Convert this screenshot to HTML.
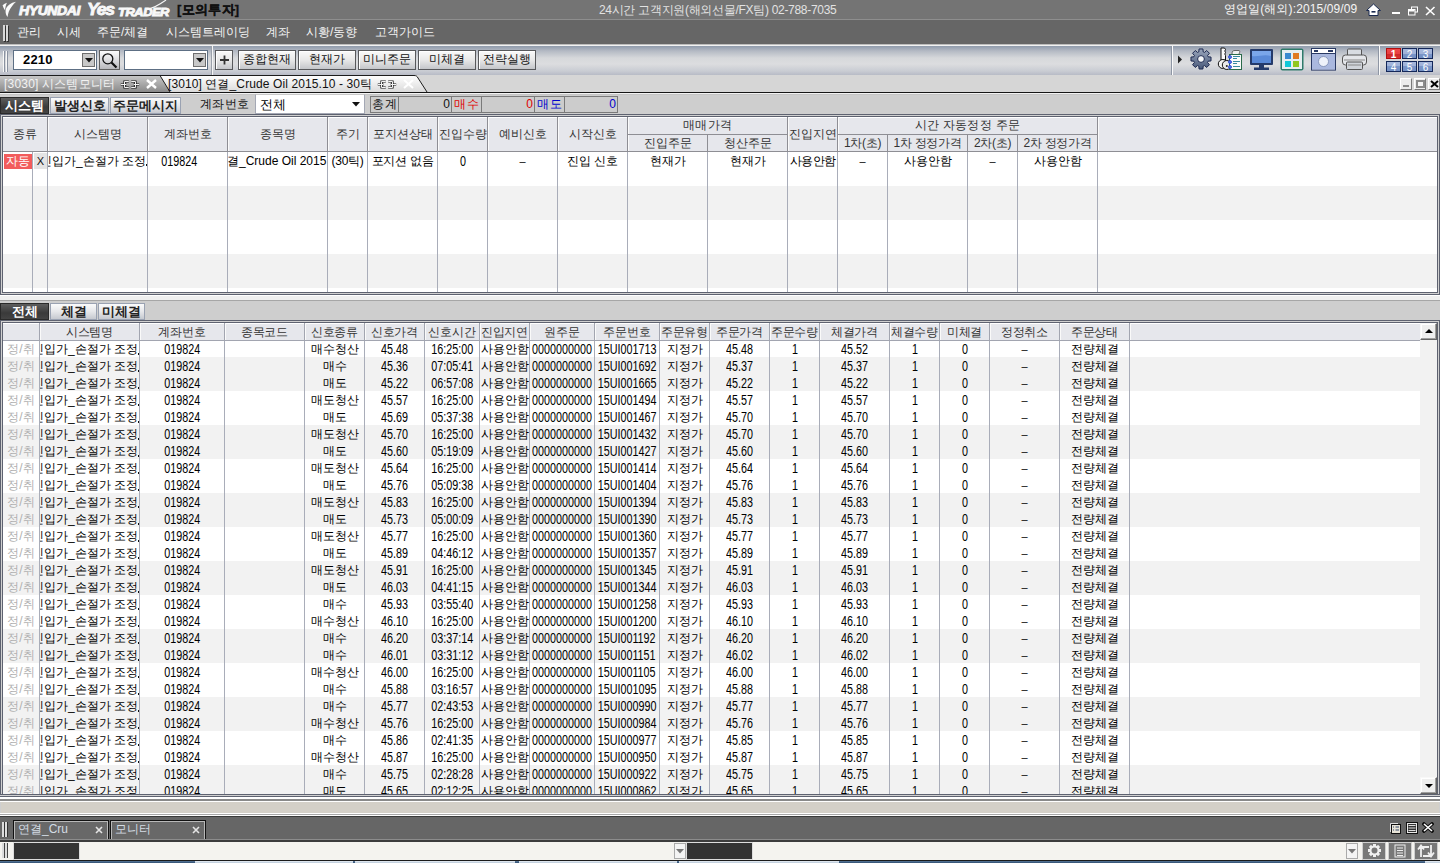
<!DOCTYPE html><html><head><meta charset="utf-8"><style>
*{margin:0;padding:0;box-sizing:border-box}
html,body{width:1440px;height:863px;overflow:hidden;background:#cfcfcf;font-family:"Liberation Sans",sans-serif;font-size:12px;color:#000}
div{position:absolute}
.t{white-space:nowrap;line-height:14px}
.c{white-space:nowrap;text-align:center;overflow:hidden}
.n{display:inline-block;font-size:14px;margin:0 -30px;transform:scaleX(.77);transform-origin:50% 50%}
.btn{background:linear-gradient(#fafafa,#e8e8e8 50%,#c4c6ca);border:1px solid #58595c;box-shadow:inset 1px 1px 0 #fff}
</style></head><body><div style="left:0px;top:0px;width:1440px;height:19px;background:#747474"></div>
<div style="left:0px;top:19px;width:1440px;height:1px;background:#8e8e8e"></div>
<div style="left:0px;top:20px;width:1440px;height:24px;background:#666666"></div>
<div style="left:3px;top:25px;width:2px;height:16px;background:#d8d8d8;box-shadow:1px 1px 0 #333"></div>
<div style="left:6px;top:25px;width:2px;height:16px;background:#d8d8d8;box-shadow:1px 1px 0 #333"></div>
<div class="t" style="left:17px;top:25px;color:#f4f4f4;font-size:12px">관리</div>
<div class="t" style="left:57px;top:25px;color:#f4f4f4;font-size:12px">시세</div>
<div class="t" style="left:97px;top:25px;color:#f4f4f4;font-size:12px">주문/체결</div>
<div class="t" style="left:166px;top:25px;color:#f4f4f4;font-size:12px">시스템트레이딩</div>
<div class="t" style="left:266px;top:25px;color:#f4f4f4;font-size:12px">계좌</div>
<div class="t" style="left:306px;top:25px;color:#f4f4f4;font-size:12px">시황/동향</div>
<div class="t" style="left:375px;top:25px;color:#f4f4f4;font-size:12px">고객가이드</div>
<div style="left:0px;top:44px;width:1440px;height:1px;background:#bdbdbd"></div>
<div style="left:0px;top:45px;width:1440px;height:1px;background:#f2f2f2"></div>
<div style="left:0px;top:46px;width:1440px;height:29px;background:linear-gradient(#8f9aab 0px,#b4bac4 5px,#d6d8db 12px,#dcdddf 18px,#c9ccd3 25px,#b7bbc6 29px)"></div>
<div style="left:3px;top:51px;width:1px;height:21px;background:#f8f8f8;box-shadow:1px 0 0 #8a92a0"></div>
<div style="left:6px;top:51px;width:1px;height:21px;background:#f8f8f8;box-shadow:1px 0 0 #8a92a0"></div>
<svg style="position:absolute;left:0px;top:0px" width="18" height="19" viewBox="0 0 18 19"><path d="M16 1.8 C11 2.6 6.2 6 5.6 10.5 C5.3 13 6.3 15.5 7.6 17 C8 13.5 9.2 9.5 11.8 6.5 C13.2 4.6 14.6 3 16 1.8Z" fill="#fafafa"/><path d="M2.6 5.2 C4 4.2 5.3 3.3 6.9 2.8 C5.9 5 5.3 7.5 5.1 10.5 C4 8.8 3.1 7 2.6 5.2Z" fill="#fafafa"/></svg>
<div class="t" style="left:19px;top:2px;color:#f8f8f8;font-size:13px;font-weight:bold;font-style:italic;letter-spacing:-0.4px;line-height:17px;-webkit-text-stroke:0.9px #f8f8f8;transform:scaleX(1.08);transform-origin:left">HYUNDAI</div>
<div class="t" style="left:87px;top:0px;color:#f8f8f8;font-size:16px;font-weight:bold;font-style:italic;letter-spacing:-1.2px;line-height:19px;-webkit-text-stroke:0.8px #f8f8f8;transform:scaleX(1.1);transform-origin:left">Yes</div>
<div class="t" style="left:118px;top:5px;color:#f8f8f8;font-size:11.5px;font-weight:bold;font-style:italic;letter-spacing:-0.4px;line-height:14px;-webkit-text-stroke:0.9px #f8f8f8;transform:scaleX(1.12);transform-origin:left">TRADER</div>
<svg style="position:absolute;left:146px;top:0px" width="22" height="10" viewBox="0 0 22 10"><path d="M1 9.5 C7 8 13 5 20 0" stroke="#f8f8f8" stroke-width="1.1" fill="none"/></svg>
<div class="t" style="left:177px;top:2px;color:#111;font-size:13px;font-weight:bold;line-height:16px;letter-spacing:0.3px;-webkit-text-stroke:0.3px #111">[모의투자]</div>
<div class="t" style="left:599px;top:3px;color:#e2e2e2;font-size:12px;line-height:14px;letter-spacing:-0.3px">24시간 고객지원(해외선물/FX팀) 02-788-7035</div>
<div class="t" style="left:1224px;top:2px;color:#f4f4f4;font-size:12px;line-height:14px;letter-spacing:0.1px">영업일(해외):2015/09/09</div>
<svg style="position:absolute;left:1365px;top:3px" width="17" height="14" viewBox="0 0 17 14"><path d="M8.5 1 L15.5 7.5 L13 7.5 L13 12.5 L4 12.5 L4 7.5 L1.5 7.5 Z" fill="#fff" stroke="#1a2a50" stroke-width="1"/><rect x="6.5" y="8" width="4" height="1.6" fill="#1a2a50"/></svg>
<div style="left:1392px;top:12px;width:8px;height:2px;background:#fff"></div>
<svg style="position:absolute;left:1408px;top:6px" width="11" height="10" viewBox="0 0 11 10"><rect x="3.5" y="1" width="6" height="5" fill="none" stroke="#fff" stroke-width="1"/><rect x="0.5" y="3.5" width="6.5" height="5.5" fill="#747474" stroke="#fff" stroke-width="1"/><rect x="1" y="4" width="5.5" height="1.5" fill="#fff"/></svg>
<svg style="position:absolute;left:1425px;top:6px" width="11" height="10" viewBox="0 0 11 10"><path d="M1 1 L9.5 9 M9.5 1 L1 9" stroke="#fff" stroke-width="1.6"/></svg>
<div style="left:13px;top:50px;width:84px;height:20px;background:#fff;border:1px solid #5d6f84"></div>
<div class="t" style="left:23px;top:53px;font-weight:bold;font-size:13px;line-height:14px;letter-spacing:0.2px">2210</div>
<div style="left:82px;top:53px;width:13px;height:14px;background:#c8c8c8;border:1px solid #6e6e6e"></div>
<svg style="position:absolute;left:85px;top:58px" width="8" height="5" viewBox="0 0 8 5"><path d="M0 0 H8 L4 4.5Z" fill="#111"/></svg>
<div style="left:99px;top:50px;width:21px;height:20px;background:linear-gradient(#fcfcfc,#e4e4e6 40%,#b8b8bc);border:1px solid #606060"></div>
<svg style="position:absolute;left:101px;top:52px" width="18" height="17" viewBox="0 0 18 17"><circle cx="6.8" cy="6.8" r="5" fill="none" stroke="#111" stroke-width="1.3"/><path d="M10.5 10.5 L15.5 15.5" stroke="#111" stroke-width="2.2"/></svg>
<div style="left:124px;top:50px;width:84px;height:20px;background:#fff;border:1px solid #5d6f84"></div>
<div style="left:193px;top:53px;width:13px;height:14px;background:#c8c8c8;border:1px solid #6e6e6e"></div>
<svg style="position:absolute;left:196px;top:58px" width="8" height="5" viewBox="0 0 8 5"><path d="M0 0 H8 L4 4.5Z" fill="#111"/></svg>
<div style="left:212px;top:46px;width:1px;height:29px;background:#f4f4f4;box-shadow:-1px 0 0 #9aa0aa"></div>
<div style="left:215px;top:50px;width:19px;height:20px;"></div>
<div class="btn" style="left:215px;top:50px;width:18px;height:20px"></div>
<svg style="position:absolute;left:219px;top:55px" width="11" height="10" viewBox="0 0 11 10"><path d="M1 5 H10 M5.5 0.5 V9.5" stroke="#333" stroke-width="1.8"/></svg>
<div class="btn c" style="left:238px;top:50px;width:58px;height:20px;line-height:17px;font-size:12px;color:#111">종합현재</div>
<div class="btn c" style="left:298px;top:50px;width:58px;height:20px;line-height:17px;font-size:12px;color:#111">현재가</div>
<div class="btn c" style="left:358px;top:50px;width:58px;height:20px;line-height:17px;font-size:12px;color:#111">미니주문</div>
<div class="btn c" style="left:418px;top:50px;width:58px;height:20px;line-height:17px;font-size:12px;color:#111">미체결</div>
<div class="btn c" style="left:478px;top:50px;width:58px;height:20px;line-height:17px;font-size:12px;color:#111">전략실행</div>
<div style="left:1172px;top:46px;width:1px;height:29px;background:#fafafa;box-shadow:-1px 0 0 #8e96a4"></div>
<svg style="position:absolute;left:1177px;top:55px" width="6" height="9" viewBox="0 0 6 9"><path d="M1 0.5 L5 4.5 L1 8.5Z" fill="#222"/></svg>
<svg style="position:absolute;left:1190px;top:48px" width="22" height="22" viewBox="0 0 22 22"><defs><linearGradient id="gg" x1="0" y1="0" x2="0" y2="1"><stop offset="0" stop-color="#9aa6bc"/><stop offset="1" stop-color="#4a5a7a"/></linearGradient></defs><path d="M8.17 4.16 L8.81 3.93 L9.07 0.98 L12.93 0.98 L13.19 3.93 L13.83 4.16 L14.45 4.45 L16.72 2.56 L19.44 5.28 L17.55 7.55 L17.84 8.17 L18.07 8.81 L21.02 9.07 L21.02 12.93 L18.07 13.19 L17.84 13.83 L17.55 14.45 L19.44 16.72 L16.72 19.44 L14.45 17.55 L13.83 17.84 L13.19 18.07 L12.93 21.02 L9.07 21.02 L8.81 18.07 L8.17 17.84 L7.55 17.55 L5.28 19.44 L2.56 16.72 L4.45 14.45 L4.16 13.83 L3.93 13.19 L0.98 12.93 L0.98 9.07 L3.93 8.81 L4.16 8.17 L4.45 7.55 L2.56 5.28 L5.28 2.56 L7.55 4.45Z" fill="url(#gg)" stroke="#1c2850" stroke-width="1"/><circle cx="11" cy="11" r="3.4" fill="#f4f6f8" stroke="#1c2850" stroke-width="1"/></svg>
<svg style="position:absolute;left:1217px;top:47px" width="27" height="24" viewBox="0 0 27 24"><path d="M4 1 H7.5 L8.5 2.5 L7.8 4 L8.5 5.5 L7.8 7 L8.5 8.5 V13 H4Z" fill="#fafafa" stroke="#111" stroke-width="1"/><circle cx="5.8" cy="17" r="4.5" fill="#f2f2f2" stroke="#111" stroke-width="1"/><circle cx="9.8" cy="18" r="4.5" fill="#e8e8e8" stroke="#111" stroke-width="1"/><circle cx="9.8" cy="19" r="1" fill="#222"/><path d="M15 7 C15 4 16 3.5 18 3.5 H22 C23 3.5 23 5 22 7" fill="#f0f0f0" stroke="#666" stroke-width="1"/><rect x="12.5" y="7.5" width="12" height="15" fill="#fbfbfb" stroke="#2a6a4a" stroke-width="1"/><path d="M16 9.5 H23 M16 11.5 H20 M16 14.5 H23 M16 16.5 H20 M16 19.5 H23" stroke="#3a8aa0" stroke-width="1"/><circle cx="13" cy="10" r="1.5" fill="#5a7ae8" stroke="#1a3ad0" stroke-width="0.8"/><circle cx="13" cy="15" r="1.5" fill="#5a7ae8" stroke="#1a3ad0" stroke-width="0.8"/><circle cx="13" cy="20" r="1.5" fill="#5a7ae8" stroke="#1a3ad0" stroke-width="0.8"/></svg>
<svg style="position:absolute;left:1249px;top:48px" width="25" height="23" viewBox="0 0 25 23"><rect x="1" y="1" width="23" height="16" rx="1" fill="#243a6a"/><rect x="3" y="3" width="19" height="12" fill="#5a8ad8"/><path d="M3 3 H22 V8 C15 6 9 9 3 8Z" fill="#7aa6ea"/><rect x="10" y="17" width="5" height="3" fill="#243a6a"/><rect x="5" y="19.5" width="15" height="2.5" fill="#243a6a"/></svg>
<svg style="position:absolute;left:1280px;top:48px" width="24" height="23" viewBox="0 0 24 23"><rect x="0.5" y="0.5" width="23" height="22" rx="2" fill="#2e7a6a"/><rect x="2" y="2" width="20" height="19" fill="#e6eef0"/><rect x="5" y="5" width="6" height="6" fill="#3a8ad0"/><rect x="13" y="5" width="6" height="6" fill="#e07a20"/><rect x="5" y="13" width="6" height="6" fill="#10c8d8"/><rect x="13" y="13" width="6" height="6" fill="#90c820"/></svg>
<svg style="position:absolute;left:1311px;top:48px" width="25" height="23" viewBox="0 0 25 23"><rect x="0.5" y="0.5" width="24" height="21.5" fill="#f4f6fa" stroke="#2a3a64" stroke-width="1.2"/><rect x="1" y="1" width="23" height="4.5" fill="#fff"/><rect x="3" y="2" width="4" height="2" fill="#2a3a64"/><rect x="17" y="2" width="5" height="2" fill="#2a3a64"/><path d="M1 5.5 H24" stroke="#2a3a64"/><rect x="1" y="6" width="23" height="15.5" fill="#aab8de"/><circle cx="12.5" cy="13.5" r="5" fill="#eef2fa" stroke="#7a8ab0" stroke-width="0.8"/></svg>
<svg style="position:absolute;left:1342px;top:48px" width="25" height="23" viewBox="0 0 25 23"><rect x="5.5" y="1" width="14" height="7" rx="1" fill="#d8dce2" stroke="#555" stroke-width="1"/><rect x="0.5" y="7" width="24" height="10" rx="3" fill="#e4e6ea" stroke="#555" stroke-width="1"/><path d="M2 12 H23" stroke="#888"/><rect x="4.5" y="14" width="16" height="7.5" rx="1" fill="#d0d4da" stroke="#555" stroke-width="1"/><path d="M6 17 H19" stroke="#888"/></svg>
<div style="left:1379px;top:46px;width:1px;height:29px;background:#fafafa;box-shadow:-1px 0 0 #8e96a4"></div>
<div class="c" style="left:1386px;top:48px;width:15px;height:11px;line-height:11px;background:linear-gradient(#f04848 0,#e84040 50%,#cc2828 50%,#d83030);border:1px solid #b01010;color:#fff;font-size:10px;font-weight:bold">1</div>
<div class="c" style="left:1402px;top:48px;width:15px;height:11px;line-height:11px;background:linear-gradient(#a6b8dc 0,#a0b2d8 50%,#7a96c8 50%,#7490c4);border:1px solid #14285a;color:#fff;font-size:10px;font-weight:normal">2</div>
<div class="c" style="left:1418px;top:48px;width:15px;height:11px;line-height:11px;background:linear-gradient(#a6b8dc 0,#a0b2d8 50%,#7a96c8 50%,#7490c4);border:1px solid #14285a;color:#fff;font-size:10px;font-weight:normal">3</div>
<div class="c" style="left:1386px;top:61px;width:15px;height:11px;line-height:11px;background:linear-gradient(#a6b8dc 0,#a0b2d8 50%,#7a96c8 50%,#7490c4);border:1px solid #14285a;color:#fff;font-size:10px;font-weight:normal">4</div>
<div class="c" style="left:1402px;top:61px;width:15px;height:11px;line-height:11px;background:linear-gradient(#a6b8dc 0,#a0b2d8 50%,#7a96c8 50%,#7490c4);border:1px solid #14285a;color:#fff;font-size:10px;font-weight:normal">5</div>
<div class="c" style="left:1418px;top:61px;width:15px;height:11px;line-height:11px;background:linear-gradient(#a6b8dc 0,#a0b2d8 50%,#7a96c8 50%,#7490c4);border:1px solid #14285a;color:#fff;font-size:10px;font-weight:normal">6</div>
<div style="left:0px;top:75px;width:1440px;height:17px;background:#d6d6d6"></div>
<svg style="position:absolute;left:0;top:75px" width="440" height="18" viewBox="0 0 440 18"><defs><linearGradient id="g1" x1="0" y1="0" x2="0" y2="1"><stop offset="0" stop-color="#c8c8c8"/><stop offset="1" stop-color="#8a8a8a"/></linearGradient><linearGradient id="g2" x1="0" y1="0" x2="0" y2="1"><stop offset="0" stop-color="#ffffff"/><stop offset="1" stop-color="#dadada"/></linearGradient></defs><path d="M0 0.5 H160 L170 17 H0Z" fill="url(#g1)"/><path d="M160 0.5 H414 C416 0.5 417 1 418 3 L427 17 H170Z" fill="url(#g2)"/><path d="M0 0.5 H414 C416 0.5 417 1 418 3 L427 17" fill="none" stroke="#1c1c1c" stroke-width="1"/><path d="M160 0.5 L170 17" stroke="#1c1c1c" stroke-width="1"/></svg>
<div class="t" style="left:4px;top:77px;color:#f2f2f2;font-size:12px;line-height:14px;letter-spacing:0.2px">[3030] 시스템모니터</div>
<svg style="position:absolute;left:120px;top:79px" width="20" height="11" viewBox="0 0 20 11"><path d="M0.8 5.5 H6.5 M8.8 2.5 H4.5 V8.5 H8.8 M11.2 2.5 H15.5 V8.5 H11.2 M13.5 5.5 H19.2" fill="none" stroke="#111" stroke-width="2.2"/><path d="M0.8 5.5 H6.5 M8.8 2.5 H4.5 V8.5 H8.8 M11.2 2.5 H15.5 V8.5 H11.2 M13.5 5.5 H19.2" fill="none" stroke="#f4f4f4" stroke-width="1"/></svg>
<svg style="position:absolute;left:146px;top:79px" width="11" height="10" viewBox="0 0 11 10"><path d="M1 1 L10 9 M10 1 L1 9" stroke="#fff" stroke-width="2.4"/></svg>
<div class="t" style="left:168px;top:77px;color:#111;font-size:12px;line-height:14px;letter-spacing:0.1px">[3010] 연결_Crude Oil 2015.10 - 30틱</div>
<svg style="position:absolute;left:377px;top:79px" width="20" height="11" viewBox="0 0 20 11"><path d="M0.8 5.5 H6.5 M8.8 2.5 H4.5 V8.5 H8.8 M11.2 2.5 H15.5 V8.5 H11.2 M13.5 5.5 H19.2" fill="none" stroke="#111" stroke-width="2.2"/><path d="M0.8 5.5 H6.5 M8.8 2.5 H4.5 V8.5 H8.8 M11.2 2.5 H15.5 V8.5 H11.2 M13.5 5.5 H19.2" fill="none" stroke="#f4f4f4" stroke-width="1"/></svg>
<svg style="position:absolute;left:403px;top:79px" width="11" height="10" viewBox="0 0 11 10"><path d="M1 1 L10 9 M10 1 L1 9" stroke="#fff" stroke-width="2"/></svg>
<div style="left:1400px;top:78px;width:12px;height:12px;background:#ececec;border:1px solid;border-color:#fff #7a7a7a #7a7a7a #fff"></div>
<div style="left:1414px;top:78px;width:12px;height:12px;background:#ececec;border:1px solid;border-color:#fff #7a7a7a #7a7a7a #fff"></div>
<div style="left:1428px;top:78px;width:12px;height:12px;background:#ececec;border:1px solid;border-color:#fff #7a7a7a #7a7a7a #fff"></div>
<div style="left:1403px;top:85px;width:6px;height:2px;background:#8a8a8a"></div>
<div style="left:1416px;top:80px;width:9px;height:8px;border:2px solid #8a8a8a;background:#f4f4f4"></div>
<svg style="position:absolute;left:1430px;top:80px" width="9" height="8" viewBox="0 0 9 8"><path d="M1 1 L8 7 M8 1 L1 7" stroke="#000" stroke-width="2"/></svg>
<div style="left:0px;top:92px;width:1440px;height:1px;background:#161616"></div>
<div style="left:0px;top:93px;width:1440px;height:1px;background:#f2f2f2"></div>
<div style="left:0px;top:94px;width:1440px;height:1px;background:#c4c4c4"></div>
<div style="left:0px;top:95px;width:1440px;height:19px;background:#cecece"></div>
<div class="c" style="left:0px;top:97px;width:49px;height:17px;line-height:16px;background:linear-gradient(#5e5e5e,#3a3a3a 60%,#444);border:1px solid #2a2a2a;color:#fff;font-weight:bold;font-size:13px;letter-spacing:0px">시스템</div>
<div class="c" style="left:50px;top:97px;width:59px;height:17px;line-height:16px;background:linear-gradient(#fbfbfb,#e6e7ea 50%,#c6c9d0);border:1px solid #9aa2b2;color:#222;font-weight:bold;font-size:13px;letter-spacing:0px">발생신호</div>
<div class="c" style="left:110px;top:97px;width:71px;height:17px;line-height:16px;background:linear-gradient(#fbfbfb,#e6e7ea 50%,#c6c9d0);border:1px solid #9aa2b2;color:#222;font-weight:bold;font-size:13px;letter-spacing:0px">주문메시지</div>
<div class="t" style="left:200px;top:97px;color:#111;font-size:12px;letter-spacing:0.3px">계좌번호</div>
<div style="left:255px;top:94px;width:110px;height:20px;background:#fff;border:1px solid #a4a8b4;border-top-color:#c8c8c8"></div>
<div class="t" style="left:260px;top:97px;color:#000;font-size:13px;line-height:15px">전체</div>
<svg style="position:absolute;left:352px;top:102px" width="8" height="5" viewBox="0 0 8 5"><path d="M0 0 H8 L4 4.5Z" fill="#111"/></svg>
<div class="c" style="left:370px;top:96px;width:29px;height:17px;line-height:15px;background:#cccccc;border:1px solid #7a7a7a;color:#111;letter-spacing:0.5px">총계</div>
<div class="t" style="left:398px;top:96px;width:54px;height:17px;line-height:15px;background:#cccccc;border:1px solid #7a7a7a;color:#111;text-align:right;padding-right:1px">0</div>
<div class="c" style="left:451px;top:96px;width:31px;height:17px;line-height:15px;background:#cccccc;border:1px solid #7a7a7a;color:#e00000;letter-spacing:0.5px">매수</div>
<div class="t" style="left:481px;top:96px;width:54px;height:17px;line-height:15px;background:#cccccc;border:1px solid #7a7a7a;color:#e00000;text-align:right;padding-right:1px">0</div>
<div class="c" style="left:534px;top:96px;width:31px;height:17px;line-height:15px;background:#cccccc;border:1px solid #7a7a7a;color:#0000cc;letter-spacing:0.5px">매도</div>
<div class="t" style="left:564px;top:96px;width:54px;height:17px;line-height:15px;background:#cccccc;border:1px solid #7a7a7a;color:#0000cc;text-align:right;padding-right:1px">0</div>
<div style="left:0px;top:114px;width:1440px;height:181px;background:#5e6270"></div>
<div style="left:1px;top:115px;width:1438px;height:179px;background:#d0d0d0"></div>
<div style="left:2px;top:116px;width:1436px;height:177px;background:#5e6270"></div>
<div style="left:3px;top:117px;width:1434px;height:175px;background:#fff"></div>
<div style="left:3px;top:117px;width:1434px;height:175px;background:#fff"></div>
<div style="left:3px;top:186px;width:1434px;height:17px;background:#f2f2f2"></div>
<div style="left:3px;top:203px;width:1434px;height:17px;background:#f2f2f2"></div>
<div style="left:3px;top:254px;width:1434px;height:17px;background:#f2f2f2"></div>
<div style="left:3px;top:271px;width:1434px;height:17px;background:#f2f2f2"></div>
<div style="left:3px;top:117px;width:1434px;height:34px;background:#e6e7ec;border-top:1px solid #fff"></div>
<div style="left:3px;top:151px;width:1434px;height:1px;background:#8e8e94"></div>
<div style="left:47px;top:152px;width:1px;height:140px;background:#a9adb9"></div>
<div style="left:147px;top:152px;width:1px;height:140px;background:#a9adb9"></div>
<div style="left:227px;top:152px;width:1px;height:140px;background:#a9adb9"></div>
<div style="left:327px;top:152px;width:1px;height:140px;background:#a9adb9"></div>
<div style="left:367px;top:152px;width:1px;height:140px;background:#a9adb9"></div>
<div style="left:437px;top:152px;width:1px;height:140px;background:#a9adb9"></div>
<div style="left:487px;top:152px;width:1px;height:140px;background:#a9adb9"></div>
<div style="left:557px;top:152px;width:1px;height:140px;background:#a9adb9"></div>
<div style="left:627px;top:152px;width:1px;height:140px;background:#a9adb9"></div>
<div style="left:707px;top:152px;width:1px;height:140px;background:#a9adb9"></div>
<div style="left:787px;top:152px;width:1px;height:140px;background:#a9adb9"></div>
<div style="left:837px;top:152px;width:1px;height:140px;background:#a9adb9"></div>
<div style="left:887px;top:152px;width:1px;height:140px;background:#a9adb9"></div>
<div style="left:967px;top:152px;width:1px;height:140px;background:#a9adb9"></div>
<div style="left:1017px;top:152px;width:1px;height:140px;background:#a9adb9"></div>
<div style="left:1097px;top:152px;width:1px;height:140px;background:#a9adb9"></div>
<div style="left:32px;top:152px;width:1px;height:140px;background:#a9adb9"></div>
<div style="left:47px;top:117px;width:1px;height:34px;background:#8e8e94"></div>
<div style="left:48px;top:117px;width:1px;height:34px;background:#fafafa"></div>
<div style="left:147px;top:117px;width:1px;height:34px;background:#8e8e94"></div>
<div style="left:148px;top:117px;width:1px;height:34px;background:#fafafa"></div>
<div style="left:227px;top:117px;width:1px;height:34px;background:#8e8e94"></div>
<div style="left:228px;top:117px;width:1px;height:34px;background:#fafafa"></div>
<div style="left:327px;top:117px;width:1px;height:34px;background:#8e8e94"></div>
<div style="left:328px;top:117px;width:1px;height:34px;background:#fafafa"></div>
<div style="left:367px;top:117px;width:1px;height:34px;background:#8e8e94"></div>
<div style="left:368px;top:117px;width:1px;height:34px;background:#fafafa"></div>
<div style="left:437px;top:117px;width:1px;height:34px;background:#8e8e94"></div>
<div style="left:438px;top:117px;width:1px;height:34px;background:#fafafa"></div>
<div style="left:487px;top:117px;width:1px;height:34px;background:#8e8e94"></div>
<div style="left:488px;top:117px;width:1px;height:34px;background:#fafafa"></div>
<div style="left:557px;top:117px;width:1px;height:34px;background:#8e8e94"></div>
<div style="left:558px;top:117px;width:1px;height:34px;background:#fafafa"></div>
<div style="left:627px;top:117px;width:1px;height:34px;background:#8e8e94"></div>
<div style="left:628px;top:117px;width:1px;height:34px;background:#fafafa"></div>
<div style="left:707px;top:135px;width:1px;height:16px;background:#8e8e94"></div>
<div style="left:787px;top:117px;width:1px;height:34px;background:#8e8e94"></div>
<div style="left:788px;top:117px;width:1px;height:34px;background:#fafafa"></div>
<div style="left:837px;top:117px;width:1px;height:34px;background:#8e8e94"></div>
<div style="left:838px;top:117px;width:1px;height:34px;background:#fafafa"></div>
<div style="left:887px;top:135px;width:1px;height:16px;background:#8e8e94"></div>
<div style="left:967px;top:135px;width:1px;height:16px;background:#8e8e94"></div>
<div style="left:1017px;top:135px;width:1px;height:16px;background:#8e8e94"></div>
<div style="left:1097px;top:117px;width:1px;height:34px;background:#8e8e94"></div>
<div style="left:1098px;top:117px;width:1px;height:34px;background:#fafafa"></div>
<div style="left:628px;top:134px;width:159px;height:1px;background:#8e8e94"></div>
<div style="left:838px;top:134px;width:259px;height:1px;background:#8e8e94"></div>
<div class="c" style="left:3px;top:118px;width:44px;height:33px;line-height:33px;color:#333">종류</div>
<div class="c" style="left:48px;top:118px;width:99px;height:33px;line-height:33px;color:#333">시스템명</div>
<div class="c" style="left:148px;top:118px;width:79px;height:33px;line-height:33px;color:#333">계좌번호</div>
<div class="c" style="left:228px;top:118px;width:99px;height:33px;line-height:33px;color:#333">종목명</div>
<div class="c" style="left:328px;top:118px;width:39px;height:33px;line-height:33px;color:#333">주기</div>
<div class="c" style="left:368px;top:118px;width:69px;height:33px;line-height:33px;color:#333">포지션상태</div>
<div class="c" style="left:438px;top:118px;width:49px;height:33px;line-height:33px;color:#333">진입수량</div>
<div class="c" style="left:488px;top:118px;width:69px;height:33px;line-height:33px;color:#333">예비신호</div>
<div class="c" style="left:558px;top:118px;width:69px;height:33px;line-height:33px;color:#333">시작신호</div>
<div class="c" style="left:788px;top:118px;width:49px;height:33px;line-height:33px;color:#333">진입지연</div>
<div class="c" style="left:628px;top:117px;width:159px;height:17px;line-height:17px;color:#333;letter-spacing:0.5px">매매가격</div>
<div class="c" style="left:628px;top:135px;width:79px;height:16px;line-height:16px;color:#333">진입주문</div>
<div class="c" style="left:708px;top:135px;width:79px;height:16px;line-height:16px;color:#333">청산주문</div>
<div class="c" style="left:838px;top:117px;width:259px;height:17px;line-height:17px;color:#333;letter-spacing:0.3px">시간 자동정정 주문</div>
<div class="c" style="left:838px;top:135px;width:49px;height:16px;line-height:16px;color:#333;letter-spacing:-0.3px">1차(초)</div>
<div class="c" style="left:888px;top:135px;width:79px;height:16px;line-height:16px;color:#333;letter-spacing:-0.3px">1차 정정가격</div>
<div class="c" style="left:968px;top:135px;width:49px;height:16px;line-height:16px;color:#333;letter-spacing:-0.3px">2차(초)</div>
<div class="c" style="left:1018px;top:135px;width:79px;height:16px;line-height:16px;color:#333;letter-spacing:-0.3px">2차 정정가격</div>
<div style="left:4px;top:154px;width:28px;height:15px;background:#f25c5c"></div>
<div class="c" style="left:4px;top:154px;width:28px;height:15px;line-height:15px;color:#fff">자동</div>
<div style="left:34px;top:153px;width:13px;height:16px;background:#e4e4e4"></div>
<div class="c" style="left:34px;top:153px;width:13px;height:16px;line-height:16px;color:#111;font-size:11px;line-height:17px">X</div>
<div class="c" style="left:48px;top:153px;width:99px;height:17px;line-height:17px;text-align:left"><span style="position:absolute;left:-8px;top:0">진입가_손절가 조정</span></div>
<div style="left:146px;top:164px;width:1px;height:2px;background:#111"></div>
<div class="t" style="left:160px;top:153px;line-height:17px"><span class="n" style="margin:0 -4px">019824</span></div>
<div class="c" style="left:228px;top:153px;width:99px;height:17px;line-height:17px;"><span style="position:absolute;left:-13px;top:0">연결_Crude Oil 2015.10</span></div>
<div class="c" style="left:328px;top:153px;width:39px;height:17px;line-height:17px;letter-spacing:-0.3px">(30틱)</div>
<div class="c" style="left:368px;top:153px;width:69px;height:17px;line-height:17px;letter-spacing:-0.3px">포지션 없음</div>
<div class="c" style="left:438px;top:153px;width:49px;height:17px;line-height:17px;"><span class="n">0</span></div>
<div class="c" style="left:488px;top:153px;width:69px;height:17px;line-height:17px;font-size:11px">–</div>
<div class="c" style="left:558px;top:153px;width:69px;height:17px;line-height:17px;">진입 신호</div>
<div class="c" style="left:628px;top:153px;width:79px;height:17px;line-height:17px;">현재가</div>
<div class="c" style="left:708px;top:153px;width:79px;height:17px;line-height:17px;">현재가</div>
<div class="c" style="left:788px;top:153px;width:49px;height:17px;line-height:17px;letter-spacing:-0.5px">사용안함</div>
<div class="c" style="left:838px;top:153px;width:49px;height:17px;line-height:17px;font-size:11px">–</div>
<div class="c" style="left:888px;top:153px;width:79px;height:17px;line-height:17px;">사용안함</div>
<div class="c" style="left:968px;top:153px;width:49px;height:17px;line-height:17px;font-size:11px">–</div>
<div class="c" style="left:1018px;top:153px;width:79px;height:17px;line-height:17px;">사용안함</div>
<div style="left:0px;top:295px;width:1440px;height:1px;background:#fff"></div>
<div style="left:0px;top:296px;width:1440px;height:4px;background:#efefef"></div>
<div style="left:0px;top:300px;width:1440px;height:1px;background:#a6a6a6"></div>
<div style="left:0px;top:301px;width:1440px;height:19px;background:#cecece"></div>
<div class="c" style="left:0px;top:303px;width:49px;height:17px;line-height:16px;background:linear-gradient(#5e5e5e,#3a3a3a 60%,#444);border:1px solid #2a2a2a;color:#fff;font-weight:bold;font-size:13px;letter-spacing:0px">전체</div>
<div class="c" style="left:50px;top:303px;width:47px;height:17px;line-height:16px;background:linear-gradient(#fbfbfb,#e6e7ea 50%,#c6c9d0);border:1px solid #9aa2b2;color:#222;font-weight:bold;font-size:13px;letter-spacing:0px">체결</div>
<div class="c" style="left:98px;top:303px;width:47px;height:17px;line-height:16px;background:linear-gradient(#fbfbfb,#e6e7ea 50%,#c6c9d0);border:1px solid #9aa2b2;color:#222;font-weight:bold;font-size:13px;letter-spacing:0px">미체결</div>
<div style="left:0px;top:320px;width:1440px;height:477px;background:#5e6270"></div>
<div style="left:1px;top:321px;width:1438px;height:475px;background:#d0d0d0"></div>
<div style="left:2px;top:322px;width:1436px;height:473px;background:#5e6270"></div>
<div style="left:3px;top:323px;width:1434px;height:471px;background:#fff"></div>
<div style="left:3px;top:323px;width:1417px;height:471px;background:#fff"></div>
<div style="left:3px;top:357px;width:1417px;height:17px;background:#f2f2f2"></div>
<div style="left:3px;top:374px;width:1417px;height:17px;background:#f2f2f2"></div>
<div style="left:3px;top:425px;width:1417px;height:17px;background:#f2f2f2"></div>
<div style="left:3px;top:442px;width:1417px;height:17px;background:#f2f2f2"></div>
<div style="left:3px;top:493px;width:1417px;height:17px;background:#f2f2f2"></div>
<div style="left:3px;top:510px;width:1417px;height:17px;background:#f2f2f2"></div>
<div style="left:3px;top:561px;width:1417px;height:17px;background:#f2f2f2"></div>
<div style="left:3px;top:578px;width:1417px;height:17px;background:#f2f2f2"></div>
<div style="left:3px;top:629px;width:1417px;height:17px;background:#f2f2f2"></div>
<div style="left:3px;top:646px;width:1417px;height:17px;background:#f2f2f2"></div>
<div style="left:3px;top:697px;width:1417px;height:17px;background:#f2f2f2"></div>
<div style="left:3px;top:714px;width:1417px;height:17px;background:#f2f2f2"></div>
<div style="left:3px;top:765px;width:1417px;height:17px;background:#f2f2f2"></div>
<div style="left:3px;top:782px;width:1417px;height:12px;background:#f2f2f2"></div>
<div style="left:3px;top:323px;width:1417px;height:17px;background:#e6e7ec;border-top:1px solid #fff"></div>
<div style="left:3px;top:340px;width:1417px;height:1px;background:#a2a5b0"></div>
<div style="left:39px;top:323px;width:1px;height:17px;background:#a2a5b0"></div>
<div style="left:40px;top:323px;width:1px;height:17px;background:#fafafa"></div>
<div style="left:39px;top:341px;width:1px;height:453px;background:#a9adb9"></div>
<div style="left:139px;top:323px;width:1px;height:17px;background:#a2a5b0"></div>
<div style="left:140px;top:323px;width:1px;height:17px;background:#fafafa"></div>
<div style="left:139px;top:341px;width:1px;height:453px;background:#a9adb9"></div>
<div style="left:224px;top:323px;width:1px;height:17px;background:#a2a5b0"></div>
<div style="left:225px;top:323px;width:1px;height:17px;background:#fafafa"></div>
<div style="left:224px;top:341px;width:1px;height:453px;background:#a9adb9"></div>
<div style="left:304px;top:323px;width:1px;height:17px;background:#a2a5b0"></div>
<div style="left:305px;top:323px;width:1px;height:17px;background:#fafafa"></div>
<div style="left:304px;top:341px;width:1px;height:453px;background:#a9adb9"></div>
<div style="left:364px;top:323px;width:1px;height:17px;background:#a2a5b0"></div>
<div style="left:365px;top:323px;width:1px;height:17px;background:#fafafa"></div>
<div style="left:364px;top:341px;width:1px;height:453px;background:#a9adb9"></div>
<div style="left:424px;top:323px;width:1px;height:17px;background:#a2a5b0"></div>
<div style="left:425px;top:323px;width:1px;height:17px;background:#fafafa"></div>
<div style="left:424px;top:341px;width:1px;height:453px;background:#a9adb9"></div>
<div style="left:479px;top:323px;width:1px;height:17px;background:#a2a5b0"></div>
<div style="left:480px;top:323px;width:1px;height:17px;background:#fafafa"></div>
<div style="left:479px;top:341px;width:1px;height:453px;background:#a9adb9"></div>
<div style="left:529px;top:323px;width:1px;height:17px;background:#a2a5b0"></div>
<div style="left:530px;top:323px;width:1px;height:17px;background:#fafafa"></div>
<div style="left:529px;top:341px;width:1px;height:453px;background:#a9adb9"></div>
<div style="left:594px;top:323px;width:1px;height:17px;background:#a2a5b0"></div>
<div style="left:595px;top:323px;width:1px;height:17px;background:#fafafa"></div>
<div style="left:594px;top:341px;width:1px;height:453px;background:#a9adb9"></div>
<div style="left:659px;top:323px;width:1px;height:17px;background:#a2a5b0"></div>
<div style="left:660px;top:323px;width:1px;height:17px;background:#fafafa"></div>
<div style="left:659px;top:341px;width:1px;height:453px;background:#a9adb9"></div>
<div style="left:709px;top:323px;width:1px;height:17px;background:#a2a5b0"></div>
<div style="left:710px;top:323px;width:1px;height:17px;background:#fafafa"></div>
<div style="left:709px;top:341px;width:1px;height:453px;background:#a9adb9"></div>
<div style="left:769px;top:323px;width:1px;height:17px;background:#a2a5b0"></div>
<div style="left:770px;top:323px;width:1px;height:17px;background:#fafafa"></div>
<div style="left:769px;top:341px;width:1px;height:453px;background:#a9adb9"></div>
<div style="left:819px;top:323px;width:1px;height:17px;background:#a2a5b0"></div>
<div style="left:820px;top:323px;width:1px;height:17px;background:#fafafa"></div>
<div style="left:819px;top:341px;width:1px;height:453px;background:#a9adb9"></div>
<div style="left:889px;top:323px;width:1px;height:17px;background:#a2a5b0"></div>
<div style="left:890px;top:323px;width:1px;height:17px;background:#fafafa"></div>
<div style="left:889px;top:341px;width:1px;height:453px;background:#a9adb9"></div>
<div style="left:939px;top:323px;width:1px;height:17px;background:#a2a5b0"></div>
<div style="left:940px;top:323px;width:1px;height:17px;background:#fafafa"></div>
<div style="left:939px;top:341px;width:1px;height:453px;background:#a9adb9"></div>
<div style="left:989px;top:323px;width:1px;height:17px;background:#a2a5b0"></div>
<div style="left:990px;top:323px;width:1px;height:17px;background:#fafafa"></div>
<div style="left:989px;top:341px;width:1px;height:453px;background:#a9adb9"></div>
<div style="left:1059px;top:323px;width:1px;height:17px;background:#a2a5b0"></div>
<div style="left:1060px;top:323px;width:1px;height:17px;background:#fafafa"></div>
<div style="left:1059px;top:341px;width:1px;height:453px;background:#a9adb9"></div>
<div style="left:1129px;top:323px;width:1px;height:17px;background:#a2a5b0"></div>
<div style="left:1130px;top:323px;width:1px;height:17px;background:#fafafa"></div>
<div style="left:1129px;top:341px;width:1px;height:453px;background:#a9adb9"></div>
<div class="c" style="left:3px;top:324px;width:36px;height:16px;line-height:16px;color:#333;letter-spacing:-0.2px"></div>
<div class="c" style="left:40px;top:324px;width:99px;height:16px;line-height:16px;color:#333;letter-spacing:-0.2px">시스템명</div>
<div class="c" style="left:140px;top:324px;width:84px;height:16px;line-height:16px;color:#333;letter-spacing:-0.2px">계좌번호</div>
<div class="c" style="left:225px;top:324px;width:79px;height:16px;line-height:16px;color:#333;letter-spacing:-0.2px">종목코드</div>
<div class="c" style="left:305px;top:324px;width:59px;height:16px;line-height:16px;color:#333;letter-spacing:-0.2px">신호종류</div>
<div class="c" style="left:365px;top:324px;width:59px;height:16px;line-height:16px;color:#333;letter-spacing:-0.2px">신호가격</div>
<div class="c" style="left:425px;top:324px;width:54px;height:16px;line-height:16px;color:#333;letter-spacing:-0.2px">신호시간</div>
<div class="c" style="left:480px;top:324px;width:49px;height:16px;line-height:16px;color:#333;letter-spacing:-0.2px">진입지연</div>
<div class="c" style="left:530px;top:324px;width:64px;height:16px;line-height:16px;color:#333;letter-spacing:-0.2px">원주문</div>
<div class="c" style="left:595px;top:324px;width:64px;height:16px;line-height:16px;color:#333;letter-spacing:-0.2px">주문번호</div>
<div class="c" style="left:660px;top:324px;width:49px;height:16px;line-height:16px;color:#333;letter-spacing:-0.2px">주문유형</div>
<div class="c" style="left:710px;top:324px;width:59px;height:16px;line-height:16px;color:#333;letter-spacing:-0.2px">주문가격</div>
<div class="c" style="left:770px;top:324px;width:49px;height:16px;line-height:16px;color:#333;letter-spacing:-0.2px">주문수량</div>
<div class="c" style="left:820px;top:324px;width:69px;height:16px;line-height:16px;color:#333;letter-spacing:-0.2px">체결가격</div>
<div class="c" style="left:890px;top:324px;width:49px;height:16px;line-height:16px;color:#333;letter-spacing:-0.2px">체결수량</div>
<div class="c" style="left:940px;top:324px;width:49px;height:16px;line-height:16px;color:#333;letter-spacing:-0.2px">미체결</div>
<div class="c" style="left:990px;top:324px;width:69px;height:16px;line-height:16px;color:#333;letter-spacing:-0.2px">정정취소</div>
<div class="c" style="left:1060px;top:324px;width:69px;height:16px;line-height:16px;color:#333;letter-spacing:-0.2px">주문상태</div>
<div class="c" style="left:3px;top:341px;width:36px;height:17px;line-height:17px;color:#b0b0b0">정/취</div>
<div style="left:40px;top:341px;width:99px;height:17px;overflow:hidden"><div class="t" style="left:-8px;top:1px">진입가_손절가 조정</div></div>
<div style="left:138px;top:353px;width:1px;height:2px;background:#111"></div>
<div class="c" style="left:140px;top:341px;width:84px;height:17px;line-height:17px;"><span class="n">019824</span></div>
<div class="c" style="left:225px;top:341px;width:79px;height:17px;line-height:17px;"></div>
<div class="c" style="left:305px;top:341px;width:59px;height:17px;line-height:17px;">매수청산</div>
<div class="c" style="left:365px;top:341px;width:59px;height:17px;line-height:17px;"><span class="n">45.48</span></div>
<div class="c" style="left:425px;top:341px;width:54px;height:17px;line-height:17px;"><span class="n">16:25:00</span></div>
<div class="c" style="left:480px;top:341px;width:49px;height:17px;line-height:17px;">사용안함</div>
<div class="c" style="left:530px;top:341px;width:64px;height:17px;line-height:17px;"><span class="n">0000000000</span></div>
<div class="c" style="left:595px;top:341px;width:64px;height:17px;line-height:17px;"><span class="n">15UI001713</span></div>
<div class="c" style="left:660px;top:341px;width:49px;height:17px;line-height:17px;">지정가</div>
<div class="c" style="left:710px;top:341px;width:59px;height:17px;line-height:17px;"><span class="n">45.48</span></div>
<div class="c" style="left:770px;top:341px;width:49px;height:17px;line-height:17px;"><span class="n">1</span></div>
<div class="c" style="left:820px;top:341px;width:69px;height:17px;line-height:17px;"><span class="n">45.52</span></div>
<div class="c" style="left:890px;top:341px;width:49px;height:17px;line-height:17px;"><span class="n">1</span></div>
<div class="c" style="left:940px;top:341px;width:49px;height:17px;line-height:17px;"><span class="n">0</span></div>
<div class="c" style="left:990px;top:341px;width:69px;height:17px;line-height:17px;font-size:11px">–</div>
<div class="c" style="left:1060px;top:341px;width:69px;height:17px;line-height:17px;">전량체결</div>
<div class="c" style="left:3px;top:358px;width:36px;height:17px;line-height:17px;color:#b0b0b0">정/취</div>
<div style="left:40px;top:358px;width:99px;height:17px;overflow:hidden"><div class="t" style="left:-8px;top:1px">진입가_손절가 조정</div></div>
<div style="left:138px;top:370px;width:1px;height:2px;background:#111"></div>
<div class="c" style="left:140px;top:358px;width:84px;height:17px;line-height:17px;"><span class="n">019824</span></div>
<div class="c" style="left:225px;top:358px;width:79px;height:17px;line-height:17px;"></div>
<div class="c" style="left:305px;top:358px;width:59px;height:17px;line-height:17px;">매수</div>
<div class="c" style="left:365px;top:358px;width:59px;height:17px;line-height:17px;"><span class="n">45.36</span></div>
<div class="c" style="left:425px;top:358px;width:54px;height:17px;line-height:17px;"><span class="n">07:05:41</span></div>
<div class="c" style="left:480px;top:358px;width:49px;height:17px;line-height:17px;">사용안함</div>
<div class="c" style="left:530px;top:358px;width:64px;height:17px;line-height:17px;"><span class="n">0000000000</span></div>
<div class="c" style="left:595px;top:358px;width:64px;height:17px;line-height:17px;"><span class="n">15UI001692</span></div>
<div class="c" style="left:660px;top:358px;width:49px;height:17px;line-height:17px;">지정가</div>
<div class="c" style="left:710px;top:358px;width:59px;height:17px;line-height:17px;"><span class="n">45.37</span></div>
<div class="c" style="left:770px;top:358px;width:49px;height:17px;line-height:17px;"><span class="n">1</span></div>
<div class="c" style="left:820px;top:358px;width:69px;height:17px;line-height:17px;"><span class="n">45.37</span></div>
<div class="c" style="left:890px;top:358px;width:49px;height:17px;line-height:17px;"><span class="n">1</span></div>
<div class="c" style="left:940px;top:358px;width:49px;height:17px;line-height:17px;"><span class="n">0</span></div>
<div class="c" style="left:990px;top:358px;width:69px;height:17px;line-height:17px;font-size:11px">–</div>
<div class="c" style="left:1060px;top:358px;width:69px;height:17px;line-height:17px;">전량체결</div>
<div class="c" style="left:3px;top:375px;width:36px;height:17px;line-height:17px;color:#b0b0b0">정/취</div>
<div style="left:40px;top:375px;width:99px;height:17px;overflow:hidden"><div class="t" style="left:-8px;top:1px">진입가_손절가 조정</div></div>
<div style="left:138px;top:387px;width:1px;height:2px;background:#111"></div>
<div class="c" style="left:140px;top:375px;width:84px;height:17px;line-height:17px;"><span class="n">019824</span></div>
<div class="c" style="left:225px;top:375px;width:79px;height:17px;line-height:17px;"></div>
<div class="c" style="left:305px;top:375px;width:59px;height:17px;line-height:17px;">매도</div>
<div class="c" style="left:365px;top:375px;width:59px;height:17px;line-height:17px;"><span class="n">45.22</span></div>
<div class="c" style="left:425px;top:375px;width:54px;height:17px;line-height:17px;"><span class="n">06:57:08</span></div>
<div class="c" style="left:480px;top:375px;width:49px;height:17px;line-height:17px;">사용안함</div>
<div class="c" style="left:530px;top:375px;width:64px;height:17px;line-height:17px;"><span class="n">0000000000</span></div>
<div class="c" style="left:595px;top:375px;width:64px;height:17px;line-height:17px;"><span class="n">15UI001665</span></div>
<div class="c" style="left:660px;top:375px;width:49px;height:17px;line-height:17px;">지정가</div>
<div class="c" style="left:710px;top:375px;width:59px;height:17px;line-height:17px;"><span class="n">45.22</span></div>
<div class="c" style="left:770px;top:375px;width:49px;height:17px;line-height:17px;"><span class="n">1</span></div>
<div class="c" style="left:820px;top:375px;width:69px;height:17px;line-height:17px;"><span class="n">45.22</span></div>
<div class="c" style="left:890px;top:375px;width:49px;height:17px;line-height:17px;"><span class="n">1</span></div>
<div class="c" style="left:940px;top:375px;width:49px;height:17px;line-height:17px;"><span class="n">0</span></div>
<div class="c" style="left:990px;top:375px;width:69px;height:17px;line-height:17px;font-size:11px">–</div>
<div class="c" style="left:1060px;top:375px;width:69px;height:17px;line-height:17px;">전량체결</div>
<div class="c" style="left:3px;top:392px;width:36px;height:17px;line-height:17px;color:#b0b0b0">정/취</div>
<div style="left:40px;top:392px;width:99px;height:17px;overflow:hidden"><div class="t" style="left:-8px;top:1px">진입가_손절가 조정</div></div>
<div style="left:138px;top:404px;width:1px;height:2px;background:#111"></div>
<div class="c" style="left:140px;top:392px;width:84px;height:17px;line-height:17px;"><span class="n">019824</span></div>
<div class="c" style="left:225px;top:392px;width:79px;height:17px;line-height:17px;"></div>
<div class="c" style="left:305px;top:392px;width:59px;height:17px;line-height:17px;">매도청산</div>
<div class="c" style="left:365px;top:392px;width:59px;height:17px;line-height:17px;"><span class="n">45.57</span></div>
<div class="c" style="left:425px;top:392px;width:54px;height:17px;line-height:17px;"><span class="n">16:25:00</span></div>
<div class="c" style="left:480px;top:392px;width:49px;height:17px;line-height:17px;">사용안함</div>
<div class="c" style="left:530px;top:392px;width:64px;height:17px;line-height:17px;"><span class="n">0000000000</span></div>
<div class="c" style="left:595px;top:392px;width:64px;height:17px;line-height:17px;"><span class="n">15UI001494</span></div>
<div class="c" style="left:660px;top:392px;width:49px;height:17px;line-height:17px;">지정가</div>
<div class="c" style="left:710px;top:392px;width:59px;height:17px;line-height:17px;"><span class="n">45.57</span></div>
<div class="c" style="left:770px;top:392px;width:49px;height:17px;line-height:17px;"><span class="n">1</span></div>
<div class="c" style="left:820px;top:392px;width:69px;height:17px;line-height:17px;"><span class="n">45.57</span></div>
<div class="c" style="left:890px;top:392px;width:49px;height:17px;line-height:17px;"><span class="n">1</span></div>
<div class="c" style="left:940px;top:392px;width:49px;height:17px;line-height:17px;"><span class="n">0</span></div>
<div class="c" style="left:990px;top:392px;width:69px;height:17px;line-height:17px;font-size:11px">–</div>
<div class="c" style="left:1060px;top:392px;width:69px;height:17px;line-height:17px;">전량체결</div>
<div class="c" style="left:3px;top:409px;width:36px;height:17px;line-height:17px;color:#b0b0b0">정/취</div>
<div style="left:40px;top:409px;width:99px;height:17px;overflow:hidden"><div class="t" style="left:-8px;top:1px">진입가_손절가 조정</div></div>
<div style="left:138px;top:421px;width:1px;height:2px;background:#111"></div>
<div class="c" style="left:140px;top:409px;width:84px;height:17px;line-height:17px;"><span class="n">019824</span></div>
<div class="c" style="left:225px;top:409px;width:79px;height:17px;line-height:17px;"></div>
<div class="c" style="left:305px;top:409px;width:59px;height:17px;line-height:17px;">매도</div>
<div class="c" style="left:365px;top:409px;width:59px;height:17px;line-height:17px;"><span class="n">45.69</span></div>
<div class="c" style="left:425px;top:409px;width:54px;height:17px;line-height:17px;"><span class="n">05:37:38</span></div>
<div class="c" style="left:480px;top:409px;width:49px;height:17px;line-height:17px;">사용안함</div>
<div class="c" style="left:530px;top:409px;width:64px;height:17px;line-height:17px;"><span class="n">0000000000</span></div>
<div class="c" style="left:595px;top:409px;width:64px;height:17px;line-height:17px;"><span class="n">15UI001467</span></div>
<div class="c" style="left:660px;top:409px;width:49px;height:17px;line-height:17px;">지정가</div>
<div class="c" style="left:710px;top:409px;width:59px;height:17px;line-height:17px;"><span class="n">45.70</span></div>
<div class="c" style="left:770px;top:409px;width:49px;height:17px;line-height:17px;"><span class="n">1</span></div>
<div class="c" style="left:820px;top:409px;width:69px;height:17px;line-height:17px;"><span class="n">45.70</span></div>
<div class="c" style="left:890px;top:409px;width:49px;height:17px;line-height:17px;"><span class="n">1</span></div>
<div class="c" style="left:940px;top:409px;width:49px;height:17px;line-height:17px;"><span class="n">0</span></div>
<div class="c" style="left:990px;top:409px;width:69px;height:17px;line-height:17px;font-size:11px">–</div>
<div class="c" style="left:1060px;top:409px;width:69px;height:17px;line-height:17px;">전량체결</div>
<div class="c" style="left:3px;top:426px;width:36px;height:17px;line-height:17px;color:#b0b0b0">정/취</div>
<div style="left:40px;top:426px;width:99px;height:17px;overflow:hidden"><div class="t" style="left:-8px;top:1px">진입가_손절가 조정</div></div>
<div style="left:138px;top:438px;width:1px;height:2px;background:#111"></div>
<div class="c" style="left:140px;top:426px;width:84px;height:17px;line-height:17px;"><span class="n">019824</span></div>
<div class="c" style="left:225px;top:426px;width:79px;height:17px;line-height:17px;"></div>
<div class="c" style="left:305px;top:426px;width:59px;height:17px;line-height:17px;">매도청산</div>
<div class="c" style="left:365px;top:426px;width:59px;height:17px;line-height:17px;"><span class="n">45.70</span></div>
<div class="c" style="left:425px;top:426px;width:54px;height:17px;line-height:17px;"><span class="n">16:25:00</span></div>
<div class="c" style="left:480px;top:426px;width:49px;height:17px;line-height:17px;">사용안함</div>
<div class="c" style="left:530px;top:426px;width:64px;height:17px;line-height:17px;"><span class="n">0000000000</span></div>
<div class="c" style="left:595px;top:426px;width:64px;height:17px;line-height:17px;"><span class="n">15UI001432</span></div>
<div class="c" style="left:660px;top:426px;width:49px;height:17px;line-height:17px;">지정가</div>
<div class="c" style="left:710px;top:426px;width:59px;height:17px;line-height:17px;"><span class="n">45.70</span></div>
<div class="c" style="left:770px;top:426px;width:49px;height:17px;line-height:17px;"><span class="n">1</span></div>
<div class="c" style="left:820px;top:426px;width:69px;height:17px;line-height:17px;"><span class="n">45.70</span></div>
<div class="c" style="left:890px;top:426px;width:49px;height:17px;line-height:17px;"><span class="n">1</span></div>
<div class="c" style="left:940px;top:426px;width:49px;height:17px;line-height:17px;"><span class="n">0</span></div>
<div class="c" style="left:990px;top:426px;width:69px;height:17px;line-height:17px;font-size:11px">–</div>
<div class="c" style="left:1060px;top:426px;width:69px;height:17px;line-height:17px;">전량체결</div>
<div class="c" style="left:3px;top:443px;width:36px;height:17px;line-height:17px;color:#b0b0b0">정/취</div>
<div style="left:40px;top:443px;width:99px;height:17px;overflow:hidden"><div class="t" style="left:-8px;top:1px">진입가_손절가 조정</div></div>
<div style="left:138px;top:455px;width:1px;height:2px;background:#111"></div>
<div class="c" style="left:140px;top:443px;width:84px;height:17px;line-height:17px;"><span class="n">019824</span></div>
<div class="c" style="left:225px;top:443px;width:79px;height:17px;line-height:17px;"></div>
<div class="c" style="left:305px;top:443px;width:59px;height:17px;line-height:17px;">매도</div>
<div class="c" style="left:365px;top:443px;width:59px;height:17px;line-height:17px;"><span class="n">45.60</span></div>
<div class="c" style="left:425px;top:443px;width:54px;height:17px;line-height:17px;"><span class="n">05:19:09</span></div>
<div class="c" style="left:480px;top:443px;width:49px;height:17px;line-height:17px;">사용안함</div>
<div class="c" style="left:530px;top:443px;width:64px;height:17px;line-height:17px;"><span class="n">0000000000</span></div>
<div class="c" style="left:595px;top:443px;width:64px;height:17px;line-height:17px;"><span class="n">15UI001427</span></div>
<div class="c" style="left:660px;top:443px;width:49px;height:17px;line-height:17px;">지정가</div>
<div class="c" style="left:710px;top:443px;width:59px;height:17px;line-height:17px;"><span class="n">45.60</span></div>
<div class="c" style="left:770px;top:443px;width:49px;height:17px;line-height:17px;"><span class="n">1</span></div>
<div class="c" style="left:820px;top:443px;width:69px;height:17px;line-height:17px;"><span class="n">45.60</span></div>
<div class="c" style="left:890px;top:443px;width:49px;height:17px;line-height:17px;"><span class="n">1</span></div>
<div class="c" style="left:940px;top:443px;width:49px;height:17px;line-height:17px;"><span class="n">0</span></div>
<div class="c" style="left:990px;top:443px;width:69px;height:17px;line-height:17px;font-size:11px">–</div>
<div class="c" style="left:1060px;top:443px;width:69px;height:17px;line-height:17px;">전량체결</div>
<div class="c" style="left:3px;top:460px;width:36px;height:17px;line-height:17px;color:#b0b0b0">정/취</div>
<div style="left:40px;top:460px;width:99px;height:17px;overflow:hidden"><div class="t" style="left:-8px;top:1px">진입가_손절가 조정</div></div>
<div style="left:138px;top:472px;width:1px;height:2px;background:#111"></div>
<div class="c" style="left:140px;top:460px;width:84px;height:17px;line-height:17px;"><span class="n">019824</span></div>
<div class="c" style="left:225px;top:460px;width:79px;height:17px;line-height:17px;"></div>
<div class="c" style="left:305px;top:460px;width:59px;height:17px;line-height:17px;">매도청산</div>
<div class="c" style="left:365px;top:460px;width:59px;height:17px;line-height:17px;"><span class="n">45.64</span></div>
<div class="c" style="left:425px;top:460px;width:54px;height:17px;line-height:17px;"><span class="n">16:25:00</span></div>
<div class="c" style="left:480px;top:460px;width:49px;height:17px;line-height:17px;">사용안함</div>
<div class="c" style="left:530px;top:460px;width:64px;height:17px;line-height:17px;"><span class="n">0000000000</span></div>
<div class="c" style="left:595px;top:460px;width:64px;height:17px;line-height:17px;"><span class="n">15UI001414</span></div>
<div class="c" style="left:660px;top:460px;width:49px;height:17px;line-height:17px;">지정가</div>
<div class="c" style="left:710px;top:460px;width:59px;height:17px;line-height:17px;"><span class="n">45.64</span></div>
<div class="c" style="left:770px;top:460px;width:49px;height:17px;line-height:17px;"><span class="n">1</span></div>
<div class="c" style="left:820px;top:460px;width:69px;height:17px;line-height:17px;"><span class="n">45.64</span></div>
<div class="c" style="left:890px;top:460px;width:49px;height:17px;line-height:17px;"><span class="n">1</span></div>
<div class="c" style="left:940px;top:460px;width:49px;height:17px;line-height:17px;"><span class="n">0</span></div>
<div class="c" style="left:990px;top:460px;width:69px;height:17px;line-height:17px;font-size:11px">–</div>
<div class="c" style="left:1060px;top:460px;width:69px;height:17px;line-height:17px;">전량체결</div>
<div class="c" style="left:3px;top:477px;width:36px;height:17px;line-height:17px;color:#b0b0b0">정/취</div>
<div style="left:40px;top:477px;width:99px;height:17px;overflow:hidden"><div class="t" style="left:-8px;top:1px">진입가_손절가 조정</div></div>
<div style="left:138px;top:489px;width:1px;height:2px;background:#111"></div>
<div class="c" style="left:140px;top:477px;width:84px;height:17px;line-height:17px;"><span class="n">019824</span></div>
<div class="c" style="left:225px;top:477px;width:79px;height:17px;line-height:17px;"></div>
<div class="c" style="left:305px;top:477px;width:59px;height:17px;line-height:17px;">매도</div>
<div class="c" style="left:365px;top:477px;width:59px;height:17px;line-height:17px;"><span class="n">45.76</span></div>
<div class="c" style="left:425px;top:477px;width:54px;height:17px;line-height:17px;"><span class="n">05:09:38</span></div>
<div class="c" style="left:480px;top:477px;width:49px;height:17px;line-height:17px;">사용안함</div>
<div class="c" style="left:530px;top:477px;width:64px;height:17px;line-height:17px;"><span class="n">0000000000</span></div>
<div class="c" style="left:595px;top:477px;width:64px;height:17px;line-height:17px;"><span class="n">15UI001404</span></div>
<div class="c" style="left:660px;top:477px;width:49px;height:17px;line-height:17px;">지정가</div>
<div class="c" style="left:710px;top:477px;width:59px;height:17px;line-height:17px;"><span class="n">45.76</span></div>
<div class="c" style="left:770px;top:477px;width:49px;height:17px;line-height:17px;"><span class="n">1</span></div>
<div class="c" style="left:820px;top:477px;width:69px;height:17px;line-height:17px;"><span class="n">45.76</span></div>
<div class="c" style="left:890px;top:477px;width:49px;height:17px;line-height:17px;"><span class="n">1</span></div>
<div class="c" style="left:940px;top:477px;width:49px;height:17px;line-height:17px;"><span class="n">0</span></div>
<div class="c" style="left:990px;top:477px;width:69px;height:17px;line-height:17px;font-size:11px">–</div>
<div class="c" style="left:1060px;top:477px;width:69px;height:17px;line-height:17px;">전량체결</div>
<div class="c" style="left:3px;top:494px;width:36px;height:17px;line-height:17px;color:#b0b0b0">정/취</div>
<div style="left:40px;top:494px;width:99px;height:17px;overflow:hidden"><div class="t" style="left:-8px;top:1px">진입가_손절가 조정</div></div>
<div style="left:138px;top:506px;width:1px;height:2px;background:#111"></div>
<div class="c" style="left:140px;top:494px;width:84px;height:17px;line-height:17px;"><span class="n">019824</span></div>
<div class="c" style="left:225px;top:494px;width:79px;height:17px;line-height:17px;"></div>
<div class="c" style="left:305px;top:494px;width:59px;height:17px;line-height:17px;">매도청산</div>
<div class="c" style="left:365px;top:494px;width:59px;height:17px;line-height:17px;"><span class="n">45.83</span></div>
<div class="c" style="left:425px;top:494px;width:54px;height:17px;line-height:17px;"><span class="n">16:25:00</span></div>
<div class="c" style="left:480px;top:494px;width:49px;height:17px;line-height:17px;">사용안함</div>
<div class="c" style="left:530px;top:494px;width:64px;height:17px;line-height:17px;"><span class="n">0000000000</span></div>
<div class="c" style="left:595px;top:494px;width:64px;height:17px;line-height:17px;"><span class="n">15UI001394</span></div>
<div class="c" style="left:660px;top:494px;width:49px;height:17px;line-height:17px;">지정가</div>
<div class="c" style="left:710px;top:494px;width:59px;height:17px;line-height:17px;"><span class="n">45.83</span></div>
<div class="c" style="left:770px;top:494px;width:49px;height:17px;line-height:17px;"><span class="n">1</span></div>
<div class="c" style="left:820px;top:494px;width:69px;height:17px;line-height:17px;"><span class="n">45.83</span></div>
<div class="c" style="left:890px;top:494px;width:49px;height:17px;line-height:17px;"><span class="n">1</span></div>
<div class="c" style="left:940px;top:494px;width:49px;height:17px;line-height:17px;"><span class="n">0</span></div>
<div class="c" style="left:990px;top:494px;width:69px;height:17px;line-height:17px;font-size:11px">–</div>
<div class="c" style="left:1060px;top:494px;width:69px;height:17px;line-height:17px;">전량체결</div>
<div class="c" style="left:3px;top:511px;width:36px;height:17px;line-height:17px;color:#b0b0b0">정/취</div>
<div style="left:40px;top:511px;width:99px;height:17px;overflow:hidden"><div class="t" style="left:-8px;top:1px">진입가_손절가 조정</div></div>
<div style="left:138px;top:523px;width:1px;height:2px;background:#111"></div>
<div class="c" style="left:140px;top:511px;width:84px;height:17px;line-height:17px;"><span class="n">019824</span></div>
<div class="c" style="left:225px;top:511px;width:79px;height:17px;line-height:17px;"></div>
<div class="c" style="left:305px;top:511px;width:59px;height:17px;line-height:17px;">매도</div>
<div class="c" style="left:365px;top:511px;width:59px;height:17px;line-height:17px;"><span class="n">45.73</span></div>
<div class="c" style="left:425px;top:511px;width:54px;height:17px;line-height:17px;"><span class="n">05:00:09</span></div>
<div class="c" style="left:480px;top:511px;width:49px;height:17px;line-height:17px;">사용안함</div>
<div class="c" style="left:530px;top:511px;width:64px;height:17px;line-height:17px;"><span class="n">0000000000</span></div>
<div class="c" style="left:595px;top:511px;width:64px;height:17px;line-height:17px;"><span class="n">15UI001390</span></div>
<div class="c" style="left:660px;top:511px;width:49px;height:17px;line-height:17px;">지정가</div>
<div class="c" style="left:710px;top:511px;width:59px;height:17px;line-height:17px;"><span class="n">45.73</span></div>
<div class="c" style="left:770px;top:511px;width:49px;height:17px;line-height:17px;"><span class="n">1</span></div>
<div class="c" style="left:820px;top:511px;width:69px;height:17px;line-height:17px;"><span class="n">45.73</span></div>
<div class="c" style="left:890px;top:511px;width:49px;height:17px;line-height:17px;"><span class="n">1</span></div>
<div class="c" style="left:940px;top:511px;width:49px;height:17px;line-height:17px;"><span class="n">0</span></div>
<div class="c" style="left:990px;top:511px;width:69px;height:17px;line-height:17px;font-size:11px">–</div>
<div class="c" style="left:1060px;top:511px;width:69px;height:17px;line-height:17px;">전량체결</div>
<div class="c" style="left:3px;top:528px;width:36px;height:17px;line-height:17px;color:#b0b0b0">정/취</div>
<div style="left:40px;top:528px;width:99px;height:17px;overflow:hidden"><div class="t" style="left:-8px;top:1px">진입가_손절가 조정</div></div>
<div style="left:138px;top:540px;width:1px;height:2px;background:#111"></div>
<div class="c" style="left:140px;top:528px;width:84px;height:17px;line-height:17px;"><span class="n">019824</span></div>
<div class="c" style="left:225px;top:528px;width:79px;height:17px;line-height:17px;"></div>
<div class="c" style="left:305px;top:528px;width:59px;height:17px;line-height:17px;">매도청산</div>
<div class="c" style="left:365px;top:528px;width:59px;height:17px;line-height:17px;"><span class="n">45.77</span></div>
<div class="c" style="left:425px;top:528px;width:54px;height:17px;line-height:17px;"><span class="n">16:25:00</span></div>
<div class="c" style="left:480px;top:528px;width:49px;height:17px;line-height:17px;">사용안함</div>
<div class="c" style="left:530px;top:528px;width:64px;height:17px;line-height:17px;"><span class="n">0000000000</span></div>
<div class="c" style="left:595px;top:528px;width:64px;height:17px;line-height:17px;"><span class="n">15UI001360</span></div>
<div class="c" style="left:660px;top:528px;width:49px;height:17px;line-height:17px;">지정가</div>
<div class="c" style="left:710px;top:528px;width:59px;height:17px;line-height:17px;"><span class="n">45.77</span></div>
<div class="c" style="left:770px;top:528px;width:49px;height:17px;line-height:17px;"><span class="n">1</span></div>
<div class="c" style="left:820px;top:528px;width:69px;height:17px;line-height:17px;"><span class="n">45.77</span></div>
<div class="c" style="left:890px;top:528px;width:49px;height:17px;line-height:17px;"><span class="n">1</span></div>
<div class="c" style="left:940px;top:528px;width:49px;height:17px;line-height:17px;"><span class="n">0</span></div>
<div class="c" style="left:990px;top:528px;width:69px;height:17px;line-height:17px;font-size:11px">–</div>
<div class="c" style="left:1060px;top:528px;width:69px;height:17px;line-height:17px;">전량체결</div>
<div class="c" style="left:3px;top:545px;width:36px;height:17px;line-height:17px;color:#b0b0b0">정/취</div>
<div style="left:40px;top:545px;width:99px;height:17px;overflow:hidden"><div class="t" style="left:-8px;top:1px">진입가_손절가 조정</div></div>
<div style="left:138px;top:557px;width:1px;height:2px;background:#111"></div>
<div class="c" style="left:140px;top:545px;width:84px;height:17px;line-height:17px;"><span class="n">019824</span></div>
<div class="c" style="left:225px;top:545px;width:79px;height:17px;line-height:17px;"></div>
<div class="c" style="left:305px;top:545px;width:59px;height:17px;line-height:17px;">매도</div>
<div class="c" style="left:365px;top:545px;width:59px;height:17px;line-height:17px;"><span class="n">45.89</span></div>
<div class="c" style="left:425px;top:545px;width:54px;height:17px;line-height:17px;"><span class="n">04:46:12</span></div>
<div class="c" style="left:480px;top:545px;width:49px;height:17px;line-height:17px;">사용안함</div>
<div class="c" style="left:530px;top:545px;width:64px;height:17px;line-height:17px;"><span class="n">0000000000</span></div>
<div class="c" style="left:595px;top:545px;width:64px;height:17px;line-height:17px;"><span class="n">15UI001357</span></div>
<div class="c" style="left:660px;top:545px;width:49px;height:17px;line-height:17px;">지정가</div>
<div class="c" style="left:710px;top:545px;width:59px;height:17px;line-height:17px;"><span class="n">45.89</span></div>
<div class="c" style="left:770px;top:545px;width:49px;height:17px;line-height:17px;"><span class="n">1</span></div>
<div class="c" style="left:820px;top:545px;width:69px;height:17px;line-height:17px;"><span class="n">45.89</span></div>
<div class="c" style="left:890px;top:545px;width:49px;height:17px;line-height:17px;"><span class="n">1</span></div>
<div class="c" style="left:940px;top:545px;width:49px;height:17px;line-height:17px;"><span class="n">0</span></div>
<div class="c" style="left:990px;top:545px;width:69px;height:17px;line-height:17px;font-size:11px">–</div>
<div class="c" style="left:1060px;top:545px;width:69px;height:17px;line-height:17px;">전량체결</div>
<div class="c" style="left:3px;top:562px;width:36px;height:17px;line-height:17px;color:#b0b0b0">정/취</div>
<div style="left:40px;top:562px;width:99px;height:17px;overflow:hidden"><div class="t" style="left:-8px;top:1px">진입가_손절가 조정</div></div>
<div style="left:138px;top:574px;width:1px;height:2px;background:#111"></div>
<div class="c" style="left:140px;top:562px;width:84px;height:17px;line-height:17px;"><span class="n">019824</span></div>
<div class="c" style="left:225px;top:562px;width:79px;height:17px;line-height:17px;"></div>
<div class="c" style="left:305px;top:562px;width:59px;height:17px;line-height:17px;">매도청산</div>
<div class="c" style="left:365px;top:562px;width:59px;height:17px;line-height:17px;"><span class="n">45.91</span></div>
<div class="c" style="left:425px;top:562px;width:54px;height:17px;line-height:17px;"><span class="n">16:25:00</span></div>
<div class="c" style="left:480px;top:562px;width:49px;height:17px;line-height:17px;">사용안함</div>
<div class="c" style="left:530px;top:562px;width:64px;height:17px;line-height:17px;"><span class="n">0000000000</span></div>
<div class="c" style="left:595px;top:562px;width:64px;height:17px;line-height:17px;"><span class="n">15UI001345</span></div>
<div class="c" style="left:660px;top:562px;width:49px;height:17px;line-height:17px;">지정가</div>
<div class="c" style="left:710px;top:562px;width:59px;height:17px;line-height:17px;"><span class="n">45.91</span></div>
<div class="c" style="left:770px;top:562px;width:49px;height:17px;line-height:17px;"><span class="n">1</span></div>
<div class="c" style="left:820px;top:562px;width:69px;height:17px;line-height:17px;"><span class="n">45.91</span></div>
<div class="c" style="left:890px;top:562px;width:49px;height:17px;line-height:17px;"><span class="n">1</span></div>
<div class="c" style="left:940px;top:562px;width:49px;height:17px;line-height:17px;"><span class="n">0</span></div>
<div class="c" style="left:990px;top:562px;width:69px;height:17px;line-height:17px;font-size:11px">–</div>
<div class="c" style="left:1060px;top:562px;width:69px;height:17px;line-height:17px;">전량체결</div>
<div class="c" style="left:3px;top:579px;width:36px;height:17px;line-height:17px;color:#b0b0b0">정/취</div>
<div style="left:40px;top:579px;width:99px;height:17px;overflow:hidden"><div class="t" style="left:-8px;top:1px">진입가_손절가 조정</div></div>
<div style="left:138px;top:591px;width:1px;height:2px;background:#111"></div>
<div class="c" style="left:140px;top:579px;width:84px;height:17px;line-height:17px;"><span class="n">019824</span></div>
<div class="c" style="left:225px;top:579px;width:79px;height:17px;line-height:17px;"></div>
<div class="c" style="left:305px;top:579px;width:59px;height:17px;line-height:17px;">매도</div>
<div class="c" style="left:365px;top:579px;width:59px;height:17px;line-height:17px;"><span class="n">46.03</span></div>
<div class="c" style="left:425px;top:579px;width:54px;height:17px;line-height:17px;"><span class="n">04:41:15</span></div>
<div class="c" style="left:480px;top:579px;width:49px;height:17px;line-height:17px;">사용안함</div>
<div class="c" style="left:530px;top:579px;width:64px;height:17px;line-height:17px;"><span class="n">0000000000</span></div>
<div class="c" style="left:595px;top:579px;width:64px;height:17px;line-height:17px;"><span class="n">15UI001344</span></div>
<div class="c" style="left:660px;top:579px;width:49px;height:17px;line-height:17px;">지정가</div>
<div class="c" style="left:710px;top:579px;width:59px;height:17px;line-height:17px;"><span class="n">46.03</span></div>
<div class="c" style="left:770px;top:579px;width:49px;height:17px;line-height:17px;"><span class="n">1</span></div>
<div class="c" style="left:820px;top:579px;width:69px;height:17px;line-height:17px;"><span class="n">46.03</span></div>
<div class="c" style="left:890px;top:579px;width:49px;height:17px;line-height:17px;"><span class="n">1</span></div>
<div class="c" style="left:940px;top:579px;width:49px;height:17px;line-height:17px;"><span class="n">0</span></div>
<div class="c" style="left:990px;top:579px;width:69px;height:17px;line-height:17px;font-size:11px">–</div>
<div class="c" style="left:1060px;top:579px;width:69px;height:17px;line-height:17px;">전량체결</div>
<div class="c" style="left:3px;top:596px;width:36px;height:17px;line-height:17px;color:#b0b0b0">정/취</div>
<div style="left:40px;top:596px;width:99px;height:17px;overflow:hidden"><div class="t" style="left:-8px;top:1px">진입가_손절가 조정</div></div>
<div style="left:138px;top:608px;width:1px;height:2px;background:#111"></div>
<div class="c" style="left:140px;top:596px;width:84px;height:17px;line-height:17px;"><span class="n">019824</span></div>
<div class="c" style="left:225px;top:596px;width:79px;height:17px;line-height:17px;"></div>
<div class="c" style="left:305px;top:596px;width:59px;height:17px;line-height:17px;">매수</div>
<div class="c" style="left:365px;top:596px;width:59px;height:17px;line-height:17px;"><span class="n">45.93</span></div>
<div class="c" style="left:425px;top:596px;width:54px;height:17px;line-height:17px;"><span class="n">03:55:40</span></div>
<div class="c" style="left:480px;top:596px;width:49px;height:17px;line-height:17px;">사용안함</div>
<div class="c" style="left:530px;top:596px;width:64px;height:17px;line-height:17px;"><span class="n">0000000000</span></div>
<div class="c" style="left:595px;top:596px;width:64px;height:17px;line-height:17px;"><span class="n">15UI001258</span></div>
<div class="c" style="left:660px;top:596px;width:49px;height:17px;line-height:17px;">지정가</div>
<div class="c" style="left:710px;top:596px;width:59px;height:17px;line-height:17px;"><span class="n">45.93</span></div>
<div class="c" style="left:770px;top:596px;width:49px;height:17px;line-height:17px;"><span class="n">1</span></div>
<div class="c" style="left:820px;top:596px;width:69px;height:17px;line-height:17px;"><span class="n">45.93</span></div>
<div class="c" style="left:890px;top:596px;width:49px;height:17px;line-height:17px;"><span class="n">1</span></div>
<div class="c" style="left:940px;top:596px;width:49px;height:17px;line-height:17px;"><span class="n">0</span></div>
<div class="c" style="left:990px;top:596px;width:69px;height:17px;line-height:17px;font-size:11px">–</div>
<div class="c" style="left:1060px;top:596px;width:69px;height:17px;line-height:17px;">전량체결</div>
<div class="c" style="left:3px;top:613px;width:36px;height:17px;line-height:17px;color:#b0b0b0">정/취</div>
<div style="left:40px;top:613px;width:99px;height:17px;overflow:hidden"><div class="t" style="left:-8px;top:1px">진입가_손절가 조정</div></div>
<div style="left:138px;top:625px;width:1px;height:2px;background:#111"></div>
<div class="c" style="left:140px;top:613px;width:84px;height:17px;line-height:17px;"><span class="n">019824</span></div>
<div class="c" style="left:225px;top:613px;width:79px;height:17px;line-height:17px;"></div>
<div class="c" style="left:305px;top:613px;width:59px;height:17px;line-height:17px;">매수청산</div>
<div class="c" style="left:365px;top:613px;width:59px;height:17px;line-height:17px;"><span class="n">46.10</span></div>
<div class="c" style="left:425px;top:613px;width:54px;height:17px;line-height:17px;"><span class="n">16:25:00</span></div>
<div class="c" style="left:480px;top:613px;width:49px;height:17px;line-height:17px;">사용안함</div>
<div class="c" style="left:530px;top:613px;width:64px;height:17px;line-height:17px;"><span class="n">0000000000</span></div>
<div class="c" style="left:595px;top:613px;width:64px;height:17px;line-height:17px;"><span class="n">15UI001200</span></div>
<div class="c" style="left:660px;top:613px;width:49px;height:17px;line-height:17px;">지정가</div>
<div class="c" style="left:710px;top:613px;width:59px;height:17px;line-height:17px;"><span class="n">46.10</span></div>
<div class="c" style="left:770px;top:613px;width:49px;height:17px;line-height:17px;"><span class="n">1</span></div>
<div class="c" style="left:820px;top:613px;width:69px;height:17px;line-height:17px;"><span class="n">46.10</span></div>
<div class="c" style="left:890px;top:613px;width:49px;height:17px;line-height:17px;"><span class="n">1</span></div>
<div class="c" style="left:940px;top:613px;width:49px;height:17px;line-height:17px;"><span class="n">0</span></div>
<div class="c" style="left:990px;top:613px;width:69px;height:17px;line-height:17px;font-size:11px">–</div>
<div class="c" style="left:1060px;top:613px;width:69px;height:17px;line-height:17px;">전량체결</div>
<div class="c" style="left:3px;top:630px;width:36px;height:17px;line-height:17px;color:#b0b0b0">정/취</div>
<div style="left:40px;top:630px;width:99px;height:17px;overflow:hidden"><div class="t" style="left:-8px;top:1px">진입가_손절가 조정</div></div>
<div style="left:138px;top:642px;width:1px;height:2px;background:#111"></div>
<div class="c" style="left:140px;top:630px;width:84px;height:17px;line-height:17px;"><span class="n">019824</span></div>
<div class="c" style="left:225px;top:630px;width:79px;height:17px;line-height:17px;"></div>
<div class="c" style="left:305px;top:630px;width:59px;height:17px;line-height:17px;">매수</div>
<div class="c" style="left:365px;top:630px;width:59px;height:17px;line-height:17px;"><span class="n">46.20</span></div>
<div class="c" style="left:425px;top:630px;width:54px;height:17px;line-height:17px;"><span class="n">03:37:14</span></div>
<div class="c" style="left:480px;top:630px;width:49px;height:17px;line-height:17px;">사용안함</div>
<div class="c" style="left:530px;top:630px;width:64px;height:17px;line-height:17px;"><span class="n">0000000000</span></div>
<div class="c" style="left:595px;top:630px;width:64px;height:17px;line-height:17px;"><span class="n">15UI001192</span></div>
<div class="c" style="left:660px;top:630px;width:49px;height:17px;line-height:17px;">지정가</div>
<div class="c" style="left:710px;top:630px;width:59px;height:17px;line-height:17px;"><span class="n">46.20</span></div>
<div class="c" style="left:770px;top:630px;width:49px;height:17px;line-height:17px;"><span class="n">1</span></div>
<div class="c" style="left:820px;top:630px;width:69px;height:17px;line-height:17px;"><span class="n">46.20</span></div>
<div class="c" style="left:890px;top:630px;width:49px;height:17px;line-height:17px;"><span class="n">1</span></div>
<div class="c" style="left:940px;top:630px;width:49px;height:17px;line-height:17px;"><span class="n">0</span></div>
<div class="c" style="left:990px;top:630px;width:69px;height:17px;line-height:17px;font-size:11px">–</div>
<div class="c" style="left:1060px;top:630px;width:69px;height:17px;line-height:17px;">전량체결</div>
<div class="c" style="left:3px;top:647px;width:36px;height:17px;line-height:17px;color:#b0b0b0">정/취</div>
<div style="left:40px;top:647px;width:99px;height:17px;overflow:hidden"><div class="t" style="left:-8px;top:1px">진입가_손절가 조정</div></div>
<div style="left:138px;top:659px;width:1px;height:2px;background:#111"></div>
<div class="c" style="left:140px;top:647px;width:84px;height:17px;line-height:17px;"><span class="n">019824</span></div>
<div class="c" style="left:225px;top:647px;width:79px;height:17px;line-height:17px;"></div>
<div class="c" style="left:305px;top:647px;width:59px;height:17px;line-height:17px;">매수</div>
<div class="c" style="left:365px;top:647px;width:59px;height:17px;line-height:17px;"><span class="n">46.01</span></div>
<div class="c" style="left:425px;top:647px;width:54px;height:17px;line-height:17px;"><span class="n">03:31:12</span></div>
<div class="c" style="left:480px;top:647px;width:49px;height:17px;line-height:17px;">사용안함</div>
<div class="c" style="left:530px;top:647px;width:64px;height:17px;line-height:17px;"><span class="n">0000000000</span></div>
<div class="c" style="left:595px;top:647px;width:64px;height:17px;line-height:17px;"><span class="n">15UI001151</span></div>
<div class="c" style="left:660px;top:647px;width:49px;height:17px;line-height:17px;">지정가</div>
<div class="c" style="left:710px;top:647px;width:59px;height:17px;line-height:17px;"><span class="n">46.02</span></div>
<div class="c" style="left:770px;top:647px;width:49px;height:17px;line-height:17px;"><span class="n">1</span></div>
<div class="c" style="left:820px;top:647px;width:69px;height:17px;line-height:17px;"><span class="n">46.02</span></div>
<div class="c" style="left:890px;top:647px;width:49px;height:17px;line-height:17px;"><span class="n">1</span></div>
<div class="c" style="left:940px;top:647px;width:49px;height:17px;line-height:17px;"><span class="n">0</span></div>
<div class="c" style="left:990px;top:647px;width:69px;height:17px;line-height:17px;font-size:11px">–</div>
<div class="c" style="left:1060px;top:647px;width:69px;height:17px;line-height:17px;">전량체결</div>
<div class="c" style="left:3px;top:664px;width:36px;height:17px;line-height:17px;color:#b0b0b0">정/취</div>
<div style="left:40px;top:664px;width:99px;height:17px;overflow:hidden"><div class="t" style="left:-8px;top:1px">진입가_손절가 조정</div></div>
<div style="left:138px;top:676px;width:1px;height:2px;background:#111"></div>
<div class="c" style="left:140px;top:664px;width:84px;height:17px;line-height:17px;"><span class="n">019824</span></div>
<div class="c" style="left:225px;top:664px;width:79px;height:17px;line-height:17px;"></div>
<div class="c" style="left:305px;top:664px;width:59px;height:17px;line-height:17px;">매수청산</div>
<div class="c" style="left:365px;top:664px;width:59px;height:17px;line-height:17px;"><span class="n">46.00</span></div>
<div class="c" style="left:425px;top:664px;width:54px;height:17px;line-height:17px;"><span class="n">16:25:00</span></div>
<div class="c" style="left:480px;top:664px;width:49px;height:17px;line-height:17px;">사용안함</div>
<div class="c" style="left:530px;top:664px;width:64px;height:17px;line-height:17px;"><span class="n">0000000000</span></div>
<div class="c" style="left:595px;top:664px;width:64px;height:17px;line-height:17px;"><span class="n">15UI001105</span></div>
<div class="c" style="left:660px;top:664px;width:49px;height:17px;line-height:17px;">지정가</div>
<div class="c" style="left:710px;top:664px;width:59px;height:17px;line-height:17px;"><span class="n">46.00</span></div>
<div class="c" style="left:770px;top:664px;width:49px;height:17px;line-height:17px;"><span class="n">1</span></div>
<div class="c" style="left:820px;top:664px;width:69px;height:17px;line-height:17px;"><span class="n">46.00</span></div>
<div class="c" style="left:890px;top:664px;width:49px;height:17px;line-height:17px;"><span class="n">1</span></div>
<div class="c" style="left:940px;top:664px;width:49px;height:17px;line-height:17px;"><span class="n">0</span></div>
<div class="c" style="left:990px;top:664px;width:69px;height:17px;line-height:17px;font-size:11px">–</div>
<div class="c" style="left:1060px;top:664px;width:69px;height:17px;line-height:17px;">전량체결</div>
<div class="c" style="left:3px;top:681px;width:36px;height:17px;line-height:17px;color:#b0b0b0">정/취</div>
<div style="left:40px;top:681px;width:99px;height:17px;overflow:hidden"><div class="t" style="left:-8px;top:1px">진입가_손절가 조정</div></div>
<div style="left:138px;top:693px;width:1px;height:2px;background:#111"></div>
<div class="c" style="left:140px;top:681px;width:84px;height:17px;line-height:17px;"><span class="n">019824</span></div>
<div class="c" style="left:225px;top:681px;width:79px;height:17px;line-height:17px;"></div>
<div class="c" style="left:305px;top:681px;width:59px;height:17px;line-height:17px;">매수</div>
<div class="c" style="left:365px;top:681px;width:59px;height:17px;line-height:17px;"><span class="n">45.88</span></div>
<div class="c" style="left:425px;top:681px;width:54px;height:17px;line-height:17px;"><span class="n">03:16:57</span></div>
<div class="c" style="left:480px;top:681px;width:49px;height:17px;line-height:17px;">사용안함</div>
<div class="c" style="left:530px;top:681px;width:64px;height:17px;line-height:17px;"><span class="n">0000000000</span></div>
<div class="c" style="left:595px;top:681px;width:64px;height:17px;line-height:17px;"><span class="n">15UI001095</span></div>
<div class="c" style="left:660px;top:681px;width:49px;height:17px;line-height:17px;">지정가</div>
<div class="c" style="left:710px;top:681px;width:59px;height:17px;line-height:17px;"><span class="n">45.88</span></div>
<div class="c" style="left:770px;top:681px;width:49px;height:17px;line-height:17px;"><span class="n">1</span></div>
<div class="c" style="left:820px;top:681px;width:69px;height:17px;line-height:17px;"><span class="n">45.88</span></div>
<div class="c" style="left:890px;top:681px;width:49px;height:17px;line-height:17px;"><span class="n">1</span></div>
<div class="c" style="left:940px;top:681px;width:49px;height:17px;line-height:17px;"><span class="n">0</span></div>
<div class="c" style="left:990px;top:681px;width:69px;height:17px;line-height:17px;font-size:11px">–</div>
<div class="c" style="left:1060px;top:681px;width:69px;height:17px;line-height:17px;">전량체결</div>
<div class="c" style="left:3px;top:698px;width:36px;height:17px;line-height:17px;color:#b0b0b0">정/취</div>
<div style="left:40px;top:698px;width:99px;height:17px;overflow:hidden"><div class="t" style="left:-8px;top:1px">진입가_손절가 조정</div></div>
<div style="left:138px;top:710px;width:1px;height:2px;background:#111"></div>
<div class="c" style="left:140px;top:698px;width:84px;height:17px;line-height:17px;"><span class="n">019824</span></div>
<div class="c" style="left:225px;top:698px;width:79px;height:17px;line-height:17px;"></div>
<div class="c" style="left:305px;top:698px;width:59px;height:17px;line-height:17px;">매수</div>
<div class="c" style="left:365px;top:698px;width:59px;height:17px;line-height:17px;"><span class="n">45.77</span></div>
<div class="c" style="left:425px;top:698px;width:54px;height:17px;line-height:17px;"><span class="n">02:43:53</span></div>
<div class="c" style="left:480px;top:698px;width:49px;height:17px;line-height:17px;">사용안함</div>
<div class="c" style="left:530px;top:698px;width:64px;height:17px;line-height:17px;"><span class="n">0000000000</span></div>
<div class="c" style="left:595px;top:698px;width:64px;height:17px;line-height:17px;"><span class="n">15UI000990</span></div>
<div class="c" style="left:660px;top:698px;width:49px;height:17px;line-height:17px;">지정가</div>
<div class="c" style="left:710px;top:698px;width:59px;height:17px;line-height:17px;"><span class="n">45.77</span></div>
<div class="c" style="left:770px;top:698px;width:49px;height:17px;line-height:17px;"><span class="n">1</span></div>
<div class="c" style="left:820px;top:698px;width:69px;height:17px;line-height:17px;"><span class="n">45.77</span></div>
<div class="c" style="left:890px;top:698px;width:49px;height:17px;line-height:17px;"><span class="n">1</span></div>
<div class="c" style="left:940px;top:698px;width:49px;height:17px;line-height:17px;"><span class="n">0</span></div>
<div class="c" style="left:990px;top:698px;width:69px;height:17px;line-height:17px;font-size:11px">–</div>
<div class="c" style="left:1060px;top:698px;width:69px;height:17px;line-height:17px;">전량체결</div>
<div class="c" style="left:3px;top:715px;width:36px;height:17px;line-height:17px;color:#b0b0b0">정/취</div>
<div style="left:40px;top:715px;width:99px;height:17px;overflow:hidden"><div class="t" style="left:-8px;top:1px">진입가_손절가 조정</div></div>
<div style="left:138px;top:727px;width:1px;height:2px;background:#111"></div>
<div class="c" style="left:140px;top:715px;width:84px;height:17px;line-height:17px;"><span class="n">019824</span></div>
<div class="c" style="left:225px;top:715px;width:79px;height:17px;line-height:17px;"></div>
<div class="c" style="left:305px;top:715px;width:59px;height:17px;line-height:17px;">매수청산</div>
<div class="c" style="left:365px;top:715px;width:59px;height:17px;line-height:17px;"><span class="n">45.76</span></div>
<div class="c" style="left:425px;top:715px;width:54px;height:17px;line-height:17px;"><span class="n">16:25:00</span></div>
<div class="c" style="left:480px;top:715px;width:49px;height:17px;line-height:17px;">사용안함</div>
<div class="c" style="left:530px;top:715px;width:64px;height:17px;line-height:17px;"><span class="n">0000000000</span></div>
<div class="c" style="left:595px;top:715px;width:64px;height:17px;line-height:17px;"><span class="n">15UI000984</span></div>
<div class="c" style="left:660px;top:715px;width:49px;height:17px;line-height:17px;">지정가</div>
<div class="c" style="left:710px;top:715px;width:59px;height:17px;line-height:17px;"><span class="n">45.76</span></div>
<div class="c" style="left:770px;top:715px;width:49px;height:17px;line-height:17px;"><span class="n">1</span></div>
<div class="c" style="left:820px;top:715px;width:69px;height:17px;line-height:17px;"><span class="n">45.76</span></div>
<div class="c" style="left:890px;top:715px;width:49px;height:17px;line-height:17px;"><span class="n">1</span></div>
<div class="c" style="left:940px;top:715px;width:49px;height:17px;line-height:17px;"><span class="n">0</span></div>
<div class="c" style="left:990px;top:715px;width:69px;height:17px;line-height:17px;font-size:11px">–</div>
<div class="c" style="left:1060px;top:715px;width:69px;height:17px;line-height:17px;">전량체결</div>
<div class="c" style="left:3px;top:732px;width:36px;height:17px;line-height:17px;color:#b0b0b0">정/취</div>
<div style="left:40px;top:732px;width:99px;height:17px;overflow:hidden"><div class="t" style="left:-8px;top:1px">진입가_손절가 조정</div></div>
<div style="left:138px;top:744px;width:1px;height:2px;background:#111"></div>
<div class="c" style="left:140px;top:732px;width:84px;height:17px;line-height:17px;"><span class="n">019824</span></div>
<div class="c" style="left:225px;top:732px;width:79px;height:17px;line-height:17px;"></div>
<div class="c" style="left:305px;top:732px;width:59px;height:17px;line-height:17px;">매수</div>
<div class="c" style="left:365px;top:732px;width:59px;height:17px;line-height:17px;"><span class="n">45.86</span></div>
<div class="c" style="left:425px;top:732px;width:54px;height:17px;line-height:17px;"><span class="n">02:41:35</span></div>
<div class="c" style="left:480px;top:732px;width:49px;height:17px;line-height:17px;">사용안함</div>
<div class="c" style="left:530px;top:732px;width:64px;height:17px;line-height:17px;"><span class="n">0000000000</span></div>
<div class="c" style="left:595px;top:732px;width:64px;height:17px;line-height:17px;"><span class="n">15UI000977</span></div>
<div class="c" style="left:660px;top:732px;width:49px;height:17px;line-height:17px;">지정가</div>
<div class="c" style="left:710px;top:732px;width:59px;height:17px;line-height:17px;"><span class="n">45.85</span></div>
<div class="c" style="left:770px;top:732px;width:49px;height:17px;line-height:17px;"><span class="n">1</span></div>
<div class="c" style="left:820px;top:732px;width:69px;height:17px;line-height:17px;"><span class="n">45.85</span></div>
<div class="c" style="left:890px;top:732px;width:49px;height:17px;line-height:17px;"><span class="n">1</span></div>
<div class="c" style="left:940px;top:732px;width:49px;height:17px;line-height:17px;"><span class="n">0</span></div>
<div class="c" style="left:990px;top:732px;width:69px;height:17px;line-height:17px;font-size:11px">–</div>
<div class="c" style="left:1060px;top:732px;width:69px;height:17px;line-height:17px;">전량체결</div>
<div class="c" style="left:3px;top:749px;width:36px;height:17px;line-height:17px;color:#b0b0b0">정/취</div>
<div style="left:40px;top:749px;width:99px;height:17px;overflow:hidden"><div class="t" style="left:-8px;top:1px">진입가_손절가 조정</div></div>
<div style="left:138px;top:761px;width:1px;height:2px;background:#111"></div>
<div class="c" style="left:140px;top:749px;width:84px;height:17px;line-height:17px;"><span class="n">019824</span></div>
<div class="c" style="left:225px;top:749px;width:79px;height:17px;line-height:17px;"></div>
<div class="c" style="left:305px;top:749px;width:59px;height:17px;line-height:17px;">매수청산</div>
<div class="c" style="left:365px;top:749px;width:59px;height:17px;line-height:17px;"><span class="n">45.87</span></div>
<div class="c" style="left:425px;top:749px;width:54px;height:17px;line-height:17px;"><span class="n">16:25:00</span></div>
<div class="c" style="left:480px;top:749px;width:49px;height:17px;line-height:17px;">사용안함</div>
<div class="c" style="left:530px;top:749px;width:64px;height:17px;line-height:17px;"><span class="n">0000000000</span></div>
<div class="c" style="left:595px;top:749px;width:64px;height:17px;line-height:17px;"><span class="n">15UI000950</span></div>
<div class="c" style="left:660px;top:749px;width:49px;height:17px;line-height:17px;">지정가</div>
<div class="c" style="left:710px;top:749px;width:59px;height:17px;line-height:17px;"><span class="n">45.87</span></div>
<div class="c" style="left:770px;top:749px;width:49px;height:17px;line-height:17px;"><span class="n">1</span></div>
<div class="c" style="left:820px;top:749px;width:69px;height:17px;line-height:17px;"><span class="n">45.87</span></div>
<div class="c" style="left:890px;top:749px;width:49px;height:17px;line-height:17px;"><span class="n">1</span></div>
<div class="c" style="left:940px;top:749px;width:49px;height:17px;line-height:17px;"><span class="n">0</span></div>
<div class="c" style="left:990px;top:749px;width:69px;height:17px;line-height:17px;font-size:11px">–</div>
<div class="c" style="left:1060px;top:749px;width:69px;height:17px;line-height:17px;">전량체결</div>
<div class="c" style="left:3px;top:766px;width:36px;height:17px;line-height:17px;color:#b0b0b0">정/취</div>
<div style="left:40px;top:766px;width:99px;height:17px;overflow:hidden"><div class="t" style="left:-8px;top:1px">진입가_손절가 조정</div></div>
<div style="left:138px;top:778px;width:1px;height:2px;background:#111"></div>
<div class="c" style="left:140px;top:766px;width:84px;height:17px;line-height:17px;"><span class="n">019824</span></div>
<div class="c" style="left:225px;top:766px;width:79px;height:17px;line-height:17px;"></div>
<div class="c" style="left:305px;top:766px;width:59px;height:17px;line-height:17px;">매수</div>
<div class="c" style="left:365px;top:766px;width:59px;height:17px;line-height:17px;"><span class="n">45.75</span></div>
<div class="c" style="left:425px;top:766px;width:54px;height:17px;line-height:17px;"><span class="n">02:28:28</span></div>
<div class="c" style="left:480px;top:766px;width:49px;height:17px;line-height:17px;">사용안함</div>
<div class="c" style="left:530px;top:766px;width:64px;height:17px;line-height:17px;"><span class="n">0000000000</span></div>
<div class="c" style="left:595px;top:766px;width:64px;height:17px;line-height:17px;"><span class="n">15UI000922</span></div>
<div class="c" style="left:660px;top:766px;width:49px;height:17px;line-height:17px;">지정가</div>
<div class="c" style="left:710px;top:766px;width:59px;height:17px;line-height:17px;"><span class="n">45.75</span></div>
<div class="c" style="left:770px;top:766px;width:49px;height:17px;line-height:17px;"><span class="n">1</span></div>
<div class="c" style="left:820px;top:766px;width:69px;height:17px;line-height:17px;"><span class="n">45.75</span></div>
<div class="c" style="left:890px;top:766px;width:49px;height:17px;line-height:17px;"><span class="n">1</span></div>
<div class="c" style="left:940px;top:766px;width:49px;height:17px;line-height:17px;"><span class="n">0</span></div>
<div class="c" style="left:990px;top:766px;width:69px;height:17px;line-height:17px;font-size:11px">–</div>
<div class="c" style="left:1060px;top:766px;width:69px;height:17px;line-height:17px;">전량체결</div>
<div class="c" style="left:3px;top:783px;width:36px;height:17px;line-height:17px;color:#b0b0b0">정/취</div>
<div style="left:40px;top:783px;width:99px;height:17px;overflow:hidden"><div class="t" style="left:-8px;top:1px">진입가_손절가 조정</div></div>
<div class="c" style="left:140px;top:783px;width:84px;height:17px;line-height:17px;"><span class="n">019824</span></div>
<div class="c" style="left:225px;top:783px;width:79px;height:17px;line-height:17px;"></div>
<div class="c" style="left:305px;top:783px;width:59px;height:17px;line-height:17px;">매도</div>
<div class="c" style="left:365px;top:783px;width:59px;height:17px;line-height:17px;"><span class="n">45.65</span></div>
<div class="c" style="left:425px;top:783px;width:54px;height:17px;line-height:17px;"><span class="n">02:12:25</span></div>
<div class="c" style="left:480px;top:783px;width:49px;height:17px;line-height:17px;">사용안함</div>
<div class="c" style="left:530px;top:783px;width:64px;height:17px;line-height:17px;"><span class="n">0000000000</span></div>
<div class="c" style="left:595px;top:783px;width:64px;height:17px;line-height:17px;"><span class="n">15UI000862</span></div>
<div class="c" style="left:660px;top:783px;width:49px;height:17px;line-height:17px;">지정가</div>
<div class="c" style="left:710px;top:783px;width:59px;height:17px;line-height:17px;"><span class="n">45.65</span></div>
<div class="c" style="left:770px;top:783px;width:49px;height:17px;line-height:17px;"><span class="n">1</span></div>
<div class="c" style="left:820px;top:783px;width:69px;height:17px;line-height:17px;"><span class="n">45.65</span></div>
<div class="c" style="left:890px;top:783px;width:49px;height:17px;line-height:17px;"><span class="n">1</span></div>
<div class="c" style="left:940px;top:783px;width:49px;height:17px;line-height:17px;"><span class="n">0</span></div>
<div class="c" style="left:990px;top:783px;width:69px;height:17px;line-height:17px;font-size:11px">–</div>
<div class="c" style="left:1060px;top:783px;width:69px;height:17px;line-height:17px;">전량체결</div>
<div style="left:0px;top:794px;width:1440px;height:1px;background:#5e6270"></div>
<div style="left:0px;top:795px;width:1440px;height:1px;background:#d0d0d0"></div>
<div style="left:0px;top:796px;width:1440px;height:1px;background:#5e6270"></div>
<div style="left:1420px;top:323px;width:17px;height:471px;background:#f2f2f2"></div>
<div style="left:1420px;top:323px;width:17px;height:17px;background:#efefef;border:1px solid;border-color:#f8f8f8 #666 #666 #f8f8f8;box-shadow:inset -1px -1px 0 #a0a0a0, inset 1px 1px 0 #fff"></div>
<svg style="position:absolute;left:1425px;top:329px" width="8" height="4" viewBox="0 0 8 4"><path d="M0 4 H8 L4 0Z" fill="#000"/></svg>
<div style="left:1420px;top:777px;width:17px;height:17px;background:#efefef;border:1px solid;border-color:#f8f8f8 #666 #666 #f8f8f8;box-shadow:inset -1px -1px 0 #a0a0a0, inset 1px 1px 0 #fff"></div>
<svg style="position:absolute;left:1425px;top:784px" width="8" height="4" viewBox="0 0 8 4"><path d="M0 0 H8 L4 4Z" fill="#000"/></svg>
<div style="left:0px;top:797px;width:1440px;height:2px;background:#fff"></div>
<div style="left:0px;top:799px;width:1440px;height:2px;background:#8a8a8a"></div>
<div style="left:0px;top:801px;width:1440px;height:1px;background:#fff"></div>
<div style="left:1px;top:802px;width:1438px;height:11px;background:#d4d0c8"></div>
<div style="left:0px;top:813px;width:1440px;height:1px;background:#fff"></div>
<div style="left:0px;top:814px;width:1440px;height:1px;background:#a8a8a8"></div>
<div style="left:0px;top:815px;width:1440px;height:1px;background:#fff"></div>
<div style="left:0px;top:816px;width:1440px;height:1px;background:#3a3a3a"></div>
<div style="left:0px;top:817px;width:1440px;height:23px;background:#666666"></div>
<div style="left:2px;top:822px;width:2px;height:15px;background:#dcdcdc;box-shadow:1px 0 0 #333"></div>
<div style="left:5px;top:822px;width:2px;height:15px;background:#dcdcdc;box-shadow:1px 0 0 #333"></div>
<div style="left:13px;top:820px;width:96px;height:19px;border:1px solid #111;border-bottom:none"></div>
<div style="left:14px;top:821px;width:94px;height:18px;background:#686868;border:1px solid #b8b8b8;border-bottom:none"></div>
<div class="t" style="left:18px;top:822px;color:#d4dce4;font-size:12px;line-height:14px">연결_Cru</div>
<svg style="position:absolute;left:95px;top:826px" width="8" height="8" viewBox="0 0 8 8"><path d="M1 1 L7 7 M7 1 L1 7" stroke="#e4e4e4" stroke-width="1.6"/></svg>
<div style="left:110px;top:820px;width:96px;height:19px;border:1px solid #111;border-bottom:none"></div>
<div style="left:111px;top:821px;width:94px;height:18px;background:#686868;border:1px solid #b8b8b8;border-bottom:none"></div>
<div class="t" style="left:115px;top:822px;color:#d4dce4;font-size:12px;line-height:14px">모니터</div>
<svg style="position:absolute;left:192px;top:826px" width="8" height="8" viewBox="0 0 8 8"><path d="M1 1 L7 7 M7 1 L1 7" stroke="#e4e4e4" stroke-width="1.6"/></svg>
<svg style="position:absolute;left:1390px;top:823px" width="11" height="11" viewBox="0 0 11 11"><path d="M0.5 9 V0.5 H8" fill="none" stroke="#e0e0e0" stroke-width="1"/><rect x="1.5" y="1.5" width="9" height="9" fill="#e8e4d8" stroke="#111" stroke-width="1"/><path d="M3 4 H4 M3 7 H4" stroke="#334466" stroke-width="1.2"/><path d="M5.5 4 H9 M5.5 7 H9" stroke="#334466" stroke-width="1.2"/></svg>
<svg style="position:absolute;left:1406px;top:822px" width="12" height="12" viewBox="0 0 12 12"><rect x="0" y="0" width="12" height="12" fill="#111"/><rect x="1" y="1" width="10" height="10" fill="#e8e8e8"/><rect x="2" y="2" width="8" height="8" fill="#333"/><rect x="2.5" y="3" width="7" height="1" fill="#ddd"/><rect x="2.5" y="5.5" width="7" height="1" fill="#ddd"/><rect x="2.5" y="8" width="7" height="1" fill="#ddd"/></svg>
<svg style="position:absolute;left:1422px;top:822px" width="12" height="11" viewBox="0 0 12 11"><path d="M2 2 L10 9 M10 2 L2 9" stroke="#111" stroke-width="3.6" stroke-linecap="square"/><path d="M2 2 L10 9 M10 2 L2 9" stroke="#fff" stroke-width="1.6"/></svg>
<div style="left:0px;top:839px;width:1440px;height:1px;background:#8c8c8c"></div>
<div style="left:0px;top:840px;width:1440px;height:2px;background:#3c3c3c"></div>
<div style="left:0px;top:842px;width:1440px;height:18px;background:#f4f3ef"></div>
<div style="left:2px;top:843px;width:2px;height:15px;background:#dcdcdc;box-shadow:1px 0 0 #444"></div>
<div style="left:5px;top:843px;width:2px;height:15px;background:#dcdcdc;box-shadow:1px 0 0 #444"></div>
<div style="left:13px;top:842px;width:67px;height:18px;background:#333;border:1px solid #ddd"></div>
<div style="left:674px;top:843px;width:12px;height:16px;background:#f4f4f4;border:1px solid #aaa"></div>
<svg style="position:absolute;left:676px;top:849px" width="8" height="5" viewBox="0 0 8 5"><path d="M0 0 H8 L4 4.5Z" fill="#777"/></svg>
<div style="left:686px;top:842px;width:67px;height:18px;background:#333;border:1px solid #ddd"></div>
<div style="left:1346px;top:843px;width:12px;height:16px;background:#f4f4f4;border:1px solid #aaa"></div>
<svg style="position:absolute;left:1348px;top:849px" width="8" height="5" viewBox="0 0 8 5"><path d="M0 0 H8 L4 4.5Z" fill="#777"/></svg>
<div style="left:1362px;top:842px;width:24px;height:18px;background:#787878;border:1px solid #cfcfcf"></div>
<div style="left:1388px;top:842px;width:24px;height:18px;background:#787878;border:1px solid #cfcfcf"></div>
<div style="left:1414px;top:842px;width:24px;height:18px;background:#787878;border:1px solid #cfcfcf"></div>
<svg style="position:absolute;left:1368px;top:844px" width="13" height="13" viewBox="0 0 13 13"><g fill="#f0f0f0"><rect x="5" y="0" width="3" height="3" transform="rotate(0 6.5 6.5)"/><rect x="5" y="0" width="3" height="3" transform="rotate(45 6.5 6.5)"/><rect x="5" y="0" width="3" height="3" transform="rotate(90 6.5 6.5)"/><rect x="5" y="0" width="3" height="3" transform="rotate(135 6.5 6.5)"/><rect x="5" y="0" width="3" height="3" transform="rotate(180 6.5 6.5)"/><rect x="5" y="0" width="3" height="3" transform="rotate(225 6.5 6.5)"/><rect x="5" y="0" width="3" height="3" transform="rotate(270 6.5 6.5)"/><rect x="5" y="0" width="3" height="3" transform="rotate(315 6.5 6.5)"/></g><circle cx="6.5" cy="6.5" r="4" fill="none" stroke="#f0f0f0" stroke-width="2"/></svg>
<svg style="position:absolute;left:1394px;top:844px" width="12" height="14" viewBox="0 0 12 14"><rect x="1" y="1" width="10" height="12" fill="none" stroke="#eee" stroke-width="1"/><path d="M3 4 H9 M3 6.5 H9 M3 9 H9 M3 11.5 H9" stroke="#eee" stroke-width="1"/></svg>
<svg style="position:absolute;left:1417px;top:844px" width="18" height="14" viewBox="0 0 18 14"><path d="M4 13 V3 M1 5.5 L4 1.5 L7 5.5 M14 1 V11 M11 8.5 L14 12.5 L17 8.5 M4 3 H12 M6 12 H14" stroke="#f0f0f0" stroke-width="1.8" fill="none"/></svg>
<div style="left:0px;top:860px;width:1440px;height:3px;background:linear-gradient(#1a1a1a 0,#1a1a1a 1px,#5a7898 1px,#2e4e72)"></div>
<div style="left:195px;top:861px;width:158px;height:2px;background:linear-gradient(#e8eef4,#b8c8d8)"></div>
<div style="left:355px;top:861px;width:160px;height:2px;background:linear-gradient(#e8eef4,#b8c8d8)"></div>
<div style="left:519px;top:861px;width:158px;height:2px;background:linear-gradient(#e8eef4,#b8c8d8)"></div>
<div style="left:679px;top:861px;width:160px;height:2px;background:linear-gradient(#e8eef4,#b8c8d8)"></div>
<div style="left:1425px;top:861px;width:15px;height:2px;background:linear-gradient(#e8eef4,#b8c8d8)"></div></body></html>
